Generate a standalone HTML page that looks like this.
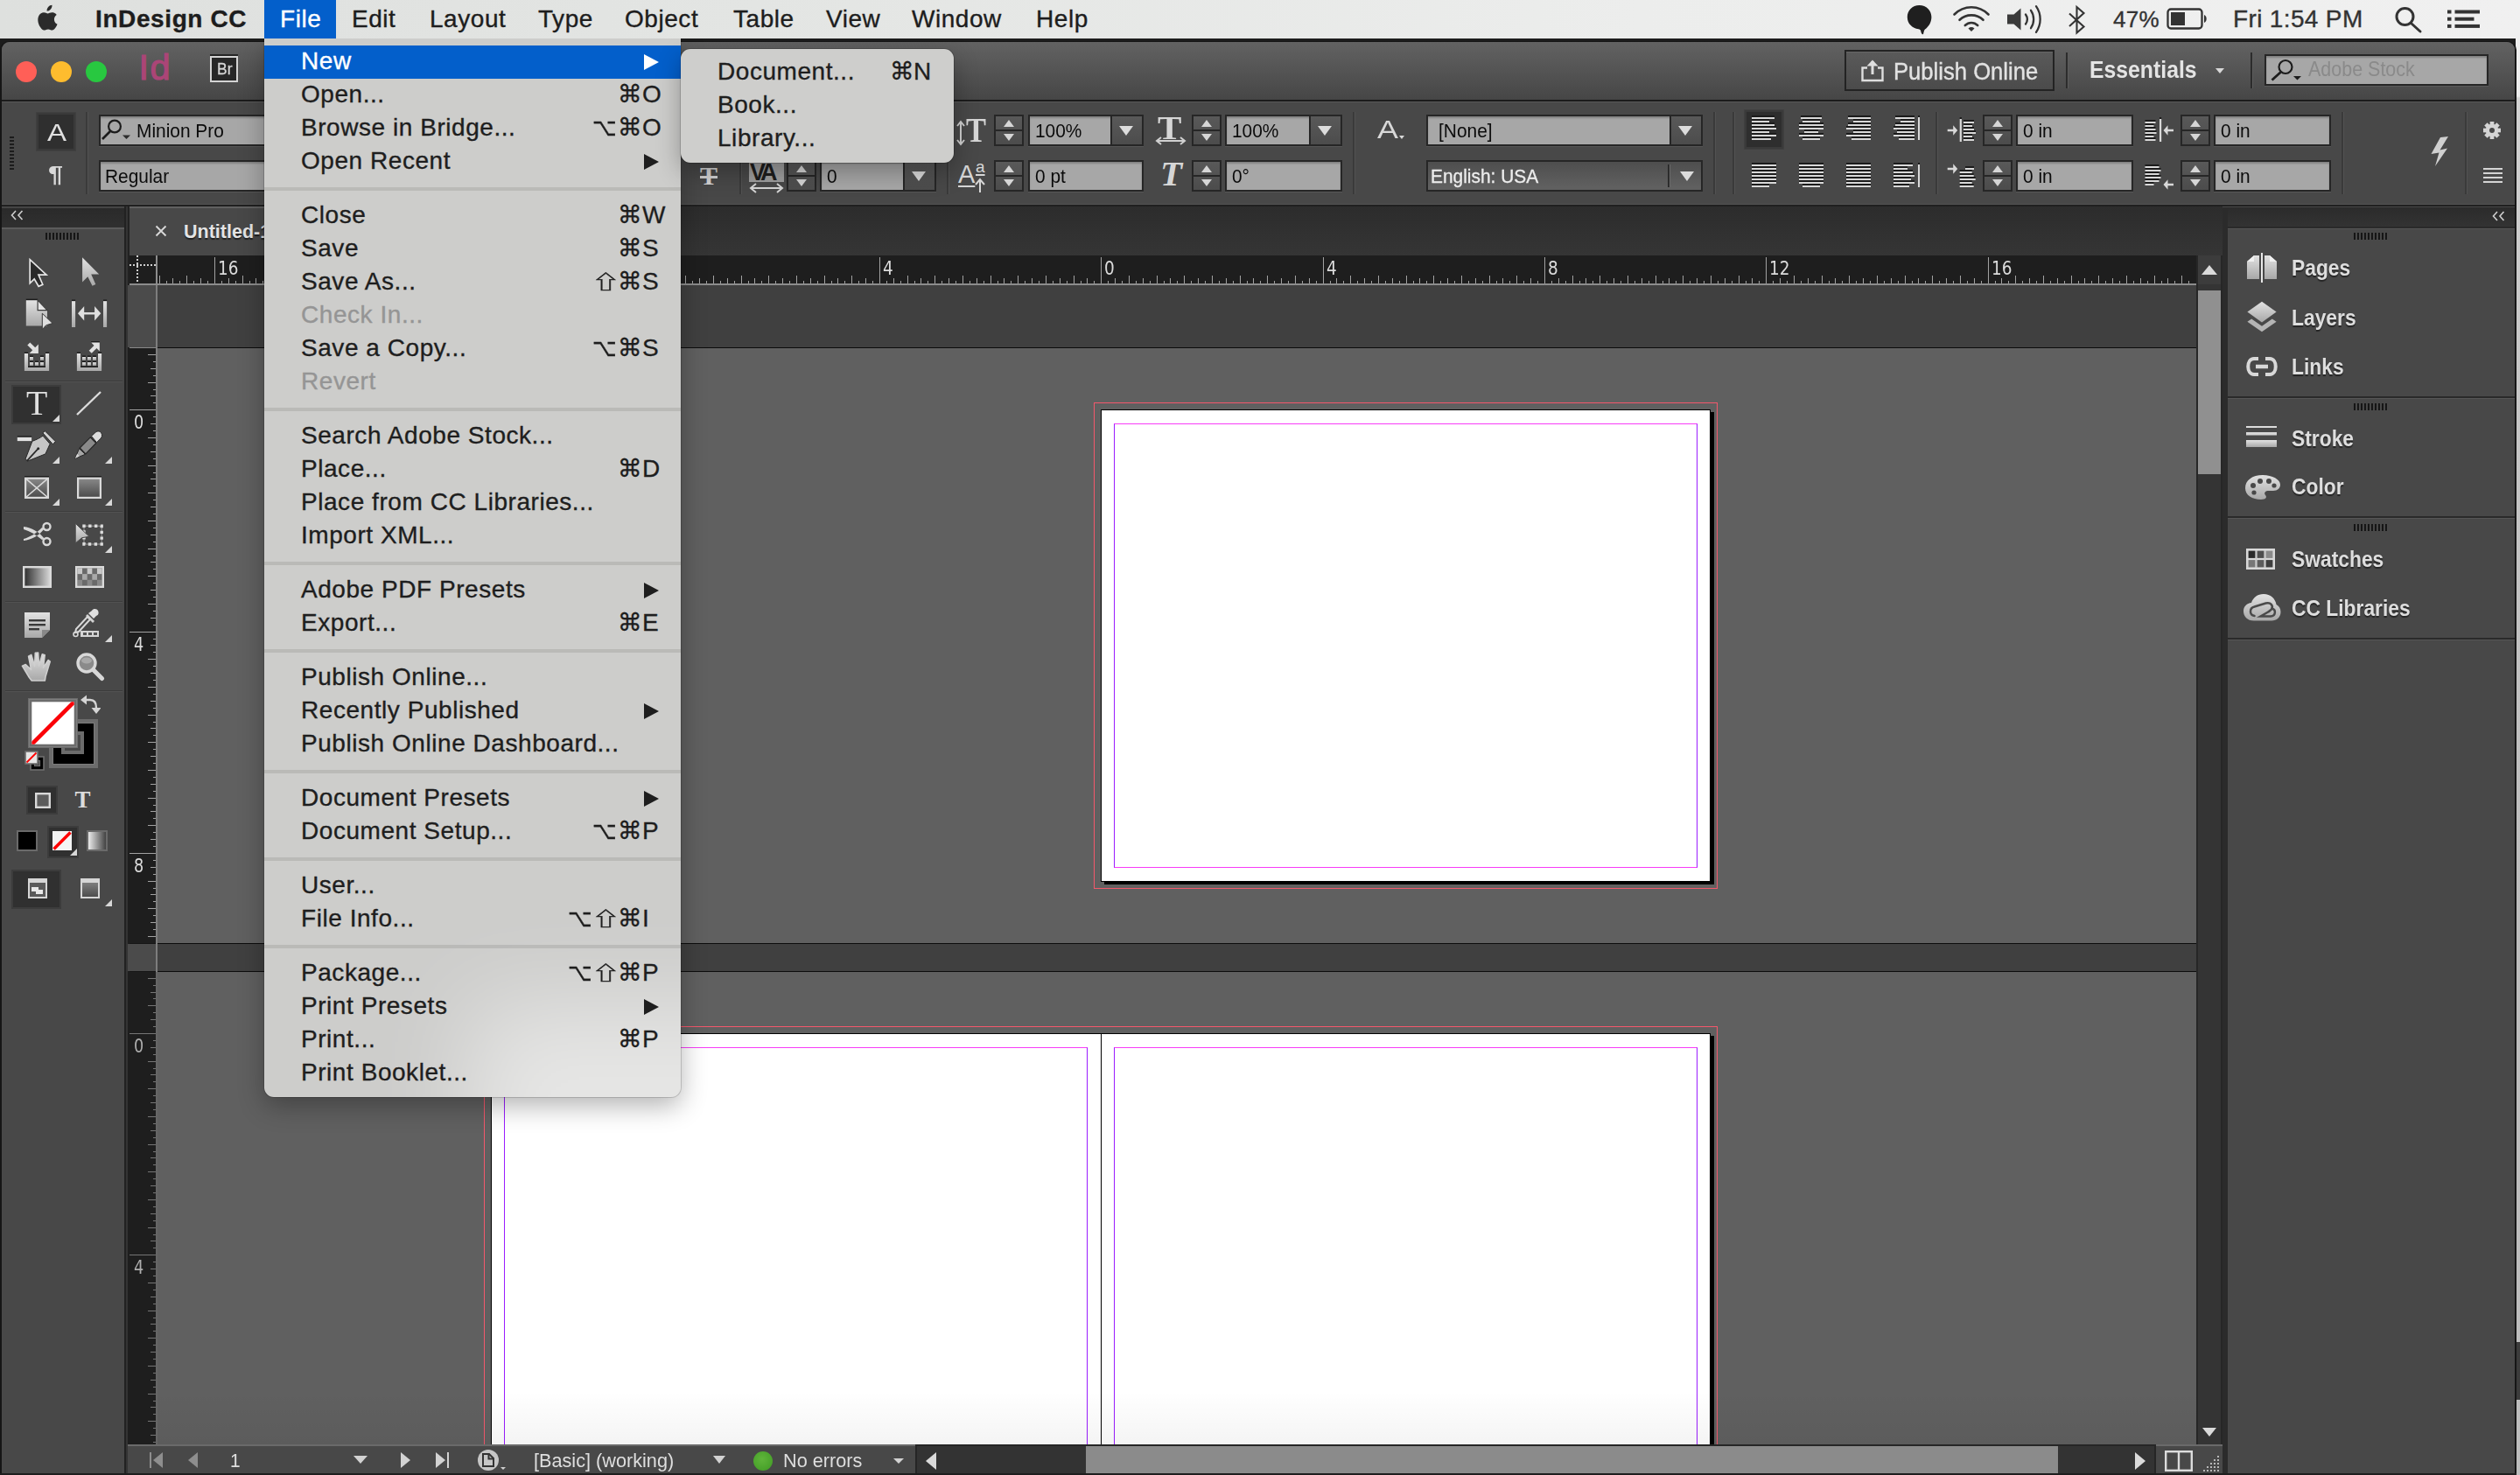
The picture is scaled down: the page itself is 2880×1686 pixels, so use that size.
<!DOCTYPE html><html><head><meta charset="utf-8"><title>InDesign CC</title><style>
*{box-sizing:border-box;margin:0;padding:0}
html,body{width:2880px;height:1686px;overflow:hidden;background:#1c1c1c}
body{position:relative;font-family:"Liberation Sans",sans-serif;}
div,svg,span.a{position:absolute}
.t{white-space:nowrap;line-height:1}
.ui{font-family:"Liberation Sans",sans-serif;transform-origin:0 50%;}
.fld{background:#a7a7a7;border:2px solid #262626;box-shadow:0 1px 0 rgba(255,255,255,.08),inset 0 2px 2px rgba(0,0,0,.22)}
.btn{background:linear-gradient(#595959,#4c4c4c);border:2px solid #262626}
.mi{left:0;width:476px;height:38px;font-size:28px;letter-spacing:.55px;color:#1e1e1e}
.mi .l{left:42px;top:3px;line-height:30px;white-space:nowrap;-webkit-text-stroke:.35px currentColor}
.mi .k{top:3px;line-height:30px;white-space:nowrap;font-family:"Liberation Sans","DejaVu Sans",sans-serif;letter-spacing:0;-webkit-text-stroke:.3px currentColor}
.mi .sh{font-family:"Noto Sans CJK JP","DejaVu Sans",sans-serif;-webkit-text-stroke:.6px currentColor;font-size:29px;transform:scale(1.13,.76);top:1px}
.dis{color:#959595}
.mi .op{transform:scaleX(.86);transform-origin:0 50%}
.sep{left:0;width:476px;height:4px;background:rgba(120,118,114,.22)}
.arr{width:0;height:0;border-left:17px solid #1e1e1e;border-top:9px solid transparent;border-bottom:9px solid transparent}
</style></head><body><div id="menubar" style="left:0;top:0;width:2880px;height:44px;z-index:50"><div style="left:0px;top:0px;width:2880px;height:44px;background:linear-gradient(90deg,#dee0de,#e3e5e3 30%,#ecedec 65%,#f0f0f0);"></div><svg style="left:41px;top:4px" width="28" height="33" viewBox="0 0 28 33"><path fill="#2b2b2b" d="M19.6 0.3c0.2 1.7-0.5 3.4-1.5 4.6-1 1.2-2.7 2.2-4.3 2-0.2-1.7 0.6-3.4 1.5-4.5C16.400 1.200 18.200 0.300 19.600 0.300zM24.9 11.3c-0.2 0.1-2.900 1.700-2.900 5.000 0 3.900 3.400 5.200 3.500 5.300 0 0.100-0.500 1.900-1.800 3.700-1.100 1.600-2.300 3.200-4.100 3.200-1.800 0-2.300-1.100-4.400-1.100-2.000 0-2.700 1.100-4.400 1.100-1.800 0.100-3.100-1.700-4.200-3.300C4.300 22.000 2.500 16.000 4.900 11.900c1.200-2.000 3.300-3.300 5.500-3.300 1.700 0 3.400 1.200 4.400 1.200 1.000 0 3.000-1.400 5.100-1.200 0.900 0 3.300 0.300 4.900 2.600z" transform="translate(-1.5,1.5) scale(1.02)"/></svg><div class="t" style="left:109px;top:6px;font-size:28px;line-height:32px;letter-spacing:0.6px;color:#1d1d1d;-webkit-text-stroke:.35px #1d1d1d;font-weight:bold;">InDesign CC</div><div style="left:302px;top:0px;width:82px;height:44px;background:#035fcb"></div><div class="t" style="left:320px;top:6px;font-size:28px;line-height:32px;letter-spacing:0.55px;color:#fff;-webkit-text-stroke:.35px #fff;">File</div><div class="t" style="left:402px;top:6px;font-size:28px;line-height:32px;letter-spacing:0.55px;color:#1d1d1d;-webkit-text-stroke:.35px #1d1d1d;">Edit</div><div class="t" style="left:491px;top:6px;font-size:28px;line-height:32px;letter-spacing:0.55px;color:#1d1d1d;-webkit-text-stroke:.35px #1d1d1d;">Layout</div><div class="t" style="left:615px;top:6px;font-size:28px;line-height:32px;letter-spacing:0.55px;color:#1d1d1d;-webkit-text-stroke:.35px #1d1d1d;">Type</div><div class="t" style="left:714px;top:6px;font-size:28px;line-height:32px;letter-spacing:0.55px;color:#1d1d1d;-webkit-text-stroke:.35px #1d1d1d;">Object</div><div class="t" style="left:838px;top:6px;font-size:28px;line-height:32px;letter-spacing:0.55px;color:#1d1d1d;-webkit-text-stroke:.35px #1d1d1d;">Table</div><div class="t" style="left:944px;top:6px;font-size:28px;line-height:32px;letter-spacing:0.55px;color:#1d1d1d;-webkit-text-stroke:.35px #1d1d1d;">View</div><div class="t" style="left:1042px;top:6px;font-size:28px;line-height:32px;letter-spacing:0.55px;color:#1d1d1d;-webkit-text-stroke:.35px #1d1d1d;">Window</div><div class="t" style="left:1184px;top:6px;font-size:28px;line-height:32px;letter-spacing:0.55px;color:#1d1d1d;-webkit-text-stroke:.35px #1d1d1d;">Help</div><svg style="left:2178px;top:5px" width="32" height="36" viewBox="0 0 32 36"><path fill="#1f1f1f" d="M15.5 1C7.500 1 1.800 7.000 1.800 14.600c0 7.400 5.600 13.000 12.800 13.600 1.500 0.100 2.300 1.000 2.600 2.200 0.300 1.300 0.700 2.700 1.500 3.600 0.500 0.500 1.300 0.300 1.500-0.400 0.300-1.500 0.600-3.800 1.800-5.000C25.800 26.000 29.400 21.000 29.400 14.600 29.400 7.000 23.600 1 15.500 1z"/></svg><svg style="left:2230px;top:5px" width="46" height="34" viewBox="0 0 46 34" fill="none" stroke="#333" stroke-width="2.600" stroke-linecap="round"><path d="M3.500 11.500C14.500 0.500 31.500 0.500 42.500 11.500"/><path d="M9.500 17.800C17.000 10.500 29.000 10.500 36.500 17.800"/><path d="M15.800 24.000C20.000 20.000 26.000 20.000 30.200 24.000"/><path d="M23 31l-3.500-3.600c2.000-1.800 5.000-1.800 7.000 0z" fill="#333" stroke="none"/></svg><svg style="left:2292px;top:4px" width="46" height="36" viewBox="0 0 46 36" fill="none" stroke="#333" stroke-width="2.300" stroke-linecap="round"><path d="M2 12.500h7.500L17.500 5.500v25.000L9.500 23.500H2z" fill="#3a3a3a" stroke="none"/><path d="M23 12.500c2.300 3.300 2.300 7.700 0 11.000"/><path d="M29.000 7.800c4.200 6.000 4.200 14.400 0 20.400"/><path d="M35.000 3.200c6.200 9.000 6.200 20.600 0 29.600"/></svg><svg style="left:2362px;top:5px" width="24" height="36" viewBox="0 0 24 36" fill="none" stroke="#333" stroke-width="2.100" stroke-linejoin="miter"><path d="M3 10.500L19.500 25.500 11.500 32.500V3.000L19.500 10.000 3 25.000"/></svg><div class="t" style="left:2415px;top:6px;font-size:26px;line-height:32px;letter-spacing:0.3px;color:#333;-webkit-text-stroke:.35px #333;">47%</div><svg style="left:2476px;top:9px" width="50" height="26" viewBox="0 0 50 26"><rect x="1.500" y="1.500" width="39" height="22" rx="3.500" fill="none" stroke="#333" stroke-width="2.300"/><rect x="5" y="5" width="16" height="15" fill="#333"/><path d="M43 8c3.600 1.000 3.600 8.000 0 9.000z" fill="#333"/></svg><div class="t" style="left:2552px;top:6px;font-size:28px;line-height:32px;letter-spacing:0.35px;color:#333;-webkit-text-stroke:.35px #333;">Fri 1:54 PM</div><svg style="left:2736px;top:7px" width="34" height="32" viewBox="0 0 34 32" fill="none" stroke="#333" stroke-width="3" stroke-linecap="round"><circle cx="12.500" cy="12" r="9.500"/><path d="M19.500 19.500L30 29"/></svg><svg style="left:2797px;top:11px" width="38" height="22" viewBox="0 0 38 22" fill="#333"><rect x="0" y="0.500" width="4.500" height="4"/><rect x="8.500" y="0.500" width="28.500" height="4"/><rect x="0" y="8.700" width="4.500" height="4"/><rect x="8.500" y="8.700" width="22" height="4"/><rect x="0" y="16.900" width="4.500" height="4"/><rect x="8.500" y="16.900" width="28.500" height="4"/></svg></div><div id="app" style="left:0;top:0;width:2880px;height:1686px"><div style="left:2875px;top:44px;width:5px;height:1642px;background:linear-gradient(#f0f0f0 0,#ececec 66px,#d2d2d2 68px,#c6c6c6 400px,#bdbdbd 1000px)"></div><div style="left:2876px;top:1534px;width:4px;height:66px;background:#3c3c3c"></div><div style="left:0px;top:47px;width:2876px;height:1639px;background:#484848;border-radius:10px 10px 0 0;border-left:2px solid #161616;border-right:2px solid #161616;border-top:1px solid #161616"></div><div style="left:2px;top:48px;width:2872px;height:66px;background:linear-gradient(#626262,#464646);border-radius:9px 9px 0 0;"></div><div style="left:2px;top:114px;width:2872px;height:2px;background:#1b1b1b"></div><div style="left:2px;top:116px;width:2872px;height:1px;background:#595959"></div><div style="left:18px;top:70px;width:24px;height:24px;background:#ff5f57;border-radius:50%"></div><div style="left:58px;top:70px;width:24px;height:24px;background:#febc2e;border-radius:50%"></div><div style="left:98px;top:70px;width:24px;height:24px;background:#28c840;border-radius:50%"></div><div class="t" style="left:158.500px;top:54px;font-size:41.500px;line-height:46px;color:#ab4577;letter-spacing:1.500px;-webkit-text-stroke:1.200px #ab4577">Id</div><div style="left:240px;top:62px;width:32px;height:2px;background:#262626"></div><div style="left:240px;top:64px;width:32px;height:30px;border:2px solid #d4d4d4;background:#272727"></div><div class="t ui" style="left:248px;top:69px;font-size:19px;line-height:20px;color:#d6d6d6;transform:scaleX(.92);-webkit-text-stroke:.3px #d6d6d6">Br</div><div style="left:2108px;top:57px;width:240px;height:47px;border:2px solid #232323;background:linear-gradient(#5a5a5a,#4b4b4b);box-shadow:inset 0 1px 0 rgba(255,255,255,.08)"></div><svg style="left:2126px;top:66px" width="28" height="28" viewBox="0 0 28 28" fill="none" stroke="#dedede" stroke-width="2.400"><path d="M8 11.500H2.500V26H25.500V11.500H20"/><path d="M14 19V4" stroke-width="3"/><path d="M7.500 9.500L14 2.500l6.500 7z" fill="#dedede" stroke="none"/></svg><div class="t ui" style="left:2164px;top:66px;font-size:28px;line-height:32px;color:#e2e2e2;-webkit-text-stroke:.4px #e2e2e2;transform:scaleX(.915)">Publish Online</div><div style="left:2361px;top:60px;width:2px;height:41px;background:#2c2c2c;box-shadow:1px 0 0 #5c5c5c"></div><div class="t ui" style="left:2388px;top:63.500px;font-size:28px;font-weight:bold;line-height:32px;color:#e4e4e4;transform:scaleX(.885)">Essentials</div><div style="left:2532px;top:78px;width:0;height:0;border-top:6px solid #d8d8d8;border-left:5px solid transparent;border-right:5px solid transparent"></div><div style="left:2572px;top:60px;width:2px;height:41px;background:#2c2c2c;box-shadow:1px 0 0 #5c5c5c"></div><div class="fld" style="left:2588px;top:62px;width:256px;height:36px;"></div><svg style="left:2594px;top:66px" width="40" height="28" viewBox="0 0 40 28" fill="none" stroke="#1c1c1c" stroke-width="2.200"><circle cx="18" cy="10.500" r="7.500"/><path d="M12.500 16.500L2.500 25.500" stroke-width="2.800"/><path d="M27 21h9l-4.500 4.500z" fill="#1c1c1c" stroke="none"/></svg><div class="t ui" style="left:2638px;top:66px;font-size:24px;line-height:26px;color:#8a8a8a;transform:scaleX(.895)">Adobe Stock</div><div style="left:2px;top:117px;width:2872px;height:117px;background:#484848"></div><div style="left:2px;top:233px;width:2872px;height:1px;background:#525252"></div><div style="left:2px;top:234px;width:2872px;height:2px;background:#202020"></div><div style="left:11px;top:156px;width:5px;height:40px;background:repeating-linear-gradient(#1c1c1c 0 2px,transparent 2px 4px)"></div><div style="left:42px;top:129px;width:44px;height:43px;background:#2f2f2f;border:2px solid #3a3a3a;box-shadow:0 0 0 1px #404040"></div><div class="t" style="left:53.500px;top:133.500px;font-size:28.500px;line-height:34px;color:#e0e0e0;transform:scaleX(1.16);transform-origin:0 0">A</div><div class="t" style="left:55px;top:183px;font-size:26px;line-height:32px;color:#d8d8d8;font-weight:bold;font-family:'Liberation Sans','DejaVu Sans',sans-serif;transform:scaleX(1.18);transform-origin:0 0">¶</div><div style="left:98px;top:128px;width:2px;height:94px;background:#3a3a3a;box-shadow:1px 0 0 #525252"></div><div class="fld" style="left:113px;top:131px;width:192px;height:36px;"></div><div class="t ui" style="left:156px;top:137px;font-size:22px;line-height:26px;color:#0b0b0b;transform:scaleX(0.95)">Minion Pro</div><svg style="left:115px;top:134px" width="40" height="30" viewBox="0 0 40 30" fill="none" stroke="#1c1c1c" stroke-width="2.200"><circle cx="16" cy="10.500" r="6.900"/><path d="M11 16L2 25" stroke-width="2.600"/><path d="M25 20.500h9l-4.500 4.500z" fill="#2c2c2c" stroke="none"/></svg><div class="fld" style="left:113px;top:183px;width:192px;height:36px;"></div><div class="t ui" style="left:120px;top:189px;font-size:22px;line-height:26px;color:#0b0b0b;transform:scaleX(0.95)">Regular</div><div class="t" style="left:800px;top:185px;font-size:30px;line-height:32px;color:#d4d4d4;font-weight:bold;font-family:'Liberation Serif',serif;text-decoration:line-through;text-decoration-thickness:2.500px">T</div><div style="left:845px;top:128px;width:2px;height:94px;background:#3a3a3a;box-shadow:1px 0 0 #525252"></div><div style="left:856px;top:186px;width:40px;height:22px;background:#9f9f9f"></div><div class="t" style="left:857px;top:182px;font-size:27px;line-height:30px;color:#1e1e1e;font-weight:bold;letter-spacing:-4px">VA</div><svg style="left:855px;top:208px" width="42" height="14" viewBox="0 0 42 14" fill="none" stroke="#d6d6d6" stroke-width="2"><path d="M3 7h36"/><path d="M9 2L3 7l6 5M33 2l6 5-6 5"/></svg><div class="btn" style="left:899px;top:183px;width:34px;height:36px;"></div><div style="left:901px;top:200px;width:30px;height:2px;background:#262626"></div><div style="left:910.0px;top:189px;width:0;height:0;border-bottom:8px solid #d6d6d6;border-left:6px solid transparent;border-right:6px solid transparent"></div><div style="left:910.0px;top:205px;width:0;height:0;border-top:8px solid #d6d6d6;border-left:6px solid transparent;border-right:6px solid transparent"></div><div class="fld" style="left:937px;top:183px;width:133px;height:36px;"></div><div class="btn" style="left:1032px;top:183px;width:38px;height:36px;"></div><div style="left:1042.0px;top:196px;width:0;height:0;border-top:11px solid #dcdcdc;border-left:8px solid transparent;border-right:8px solid transparent"></div><div class="t ui" style="left:945px;top:189px;font-size:22px;line-height:26px;color:#0b0b0b;transform:scaleX(0.95)">0</div><div style="left:1082px;top:128px;width:2px;height:94px;background:#3a3a3a;box-shadow:1px 0 0 #525252"></div><div class="t" style="left:1104px;top:128px;font-size:40px;line-height:42px;color:#d6d6d6;font-weight:bold;font-family:'Liberation Serif',serif;transform:scaleX(.86);transform-origin:0 0">T</div><svg style="left:1092px;top:137px" width="12" height="30" viewBox="0 0 12 30" fill="none" stroke="#d0d0d0" stroke-width="2"><path d="M6 3v24"/><path d="M2 7l4-5 4 5M2 23l4 5 4-5"/></svg><div class="btn" style="left:1136px;top:131px;width:34px;height:36px;"></div><div style="left:1138px;top:148px;width:30px;height:2px;background:#262626"></div><div style="left:1147.0px;top:137px;width:0;height:0;border-bottom:8px solid #d6d6d6;border-left:6px solid transparent;border-right:6px solid transparent"></div><div style="left:1147.0px;top:153px;width:0;height:0;border-top:8px solid #d6d6d6;border-left:6px solid transparent;border-right:6px solid transparent"></div><div class="fld" style="left:1175px;top:131px;width:132px;height:36px;"></div><div class="btn" style="left:1269px;top:131px;width:38px;height:36px;"></div><div style="left:1279.0px;top:144px;width:0;height:0;border-top:11px solid #dcdcdc;border-left:8px solid transparent;border-right:8px solid transparent"></div><div class="t ui" style="left:1183px;top:137px;font-size:22px;line-height:26px;color:#0b0b0b;transform:scaleX(0.95)">100%</div><div class="t" style="left:1323px;top:125px;font-size:38px;line-height:42px;color:#d6d6d6;font-weight:bold;font-family:'Liberation Serif',serif;transform:scaleX(1.08);transform-origin:0 0">T</div><svg style="left:1319px;top:155px" width="38" height="12" viewBox="0 0 38 12" fill="none" stroke="#d0d0d0" stroke-width="2"><path d="M3 6h32"/><path d="M8 2L3 6l5 4M30 2l5 4-5 4"/></svg><div class="btn" style="left:1362px;top:131px;width:34px;height:36px;"></div><div style="left:1364px;top:148px;width:30px;height:2px;background:#262626"></div><div style="left:1373.0px;top:137px;width:0;height:0;border-bottom:8px solid #d6d6d6;border-left:6px solid transparent;border-right:6px solid transparent"></div><div style="left:1373.0px;top:153px;width:0;height:0;border-top:8px solid #d6d6d6;border-left:6px solid transparent;border-right:6px solid transparent"></div><div class="fld" style="left:1400px;top:131px;width:134px;height:36px;"></div><div class="btn" style="left:1496px;top:131px;width:38px;height:36px;"></div><div style="left:1506.0px;top:144px;width:0;height:0;border-top:11px solid #dcdcdc;border-left:8px solid transparent;border-right:8px solid transparent"></div><div class="t ui" style="left:1408px;top:137px;font-size:22px;line-height:26px;color:#0b0b0b;transform:scaleX(0.95)">100%</div><div class="t" style="left:1095px;top:184px;font-size:29px;line-height:30px;color:#d6d6d6;text-decoration:underline;text-decoration-thickness:2px;text-underline-offset:3px">A</div><div class="t" style="left:1115px;top:181px;font-size:19px;line-height:20px;color:#d6d6d6;text-decoration:underline;text-decoration-thickness:2px;text-underline-offset:2px">a</div><svg style="left:1113px;top:203px" width="14" height="18" viewBox="0 0 14 18" fill="none" stroke="#d6d6d6" stroke-width="2"><path d="M7 17V3"/><path d="M2 8l5-6 5 6"/></svg><div class="btn" style="left:1136px;top:183px;width:34px;height:36px;"></div><div style="left:1138px;top:200px;width:30px;height:2px;background:#262626"></div><div style="left:1147.0px;top:189px;width:0;height:0;border-bottom:8px solid #d6d6d6;border-left:6px solid transparent;border-right:6px solid transparent"></div><div style="left:1147.0px;top:205px;width:0;height:0;border-top:8px solid #d6d6d6;border-left:6px solid transparent;border-right:6px solid transparent"></div><div class="fld" style="left:1175px;top:183px;width:132px;height:36px;"></div><div class="t ui" style="left:1183px;top:189px;font-size:22px;line-height:26px;color:#0b0b0b;transform:scaleX(0.95)">0 pt</div><div class="t" style="left:1326px;top:176px;font-size:41px;line-height:44px;color:#d6d6d6;font-weight:bold;font-family:'Liberation Serif',serif;font-style:italic">T</div><div class="btn" style="left:1362px;top:183px;width:34px;height:36px;"></div><div style="left:1364px;top:200px;width:30px;height:2px;background:#262626"></div><div style="left:1373.0px;top:189px;width:0;height:0;border-bottom:8px solid #d6d6d6;border-left:6px solid transparent;border-right:6px solid transparent"></div><div style="left:1373.0px;top:205px;width:0;height:0;border-top:8px solid #d6d6d6;border-left:6px solid transparent;border-right:6px solid transparent"></div><div class="fld" style="left:1400px;top:183px;width:134px;height:36px;"></div><div class="t ui" style="left:1408px;top:189px;font-size:22px;line-height:26px;color:#0b0b0b;transform:scaleX(0.95)">0°</div><div style="left:1546px;top:128px;width:2px;height:94px;background:#3a3a3a;box-shadow:1px 0 0 #525252"></div><div class="t" style="left:1573.500px;top:131px;font-size:30px;line-height:34px;color:#d8d8d8;transform:scaleX(1.2);transform-origin:0 0">A</div><div style="left:1599px;top:155px;width:0;height:0;border-top:4px solid #d8d8d8;border-left:3.500px solid transparent;border-right:3.500px solid transparent"></div><div class="fld" style="left:1630px;top:131px;width:316px;height:36px;"></div><div class="btn" style="left:1908px;top:131px;width:38px;height:36px;"></div><div style="left:1918.0px;top:144px;width:0;height:0;border-top:11px solid #dcdcdc;border-left:8px solid transparent;border-right:8px solid transparent"></div><div class="t ui" style="left:1644px;top:137px;font-size:22px;line-height:26px;color:#0b0b0b;transform:scaleX(0.95)">[None]</div><div style="left:1630px;top:183px;width:316px;height:36px;background:linear-gradient(#4e4e4e,#606060 90%);border:2px solid #262626"></div><div style="left:1906px;top:188px;width:2px;height:26px;background:#2c2c2c;box-shadow:1px 0 0 #6a6a6a"></div><div style="left:1920px;top:196px;width:0;height:0;border-top:11px solid #dcdcdc;border-left:8px solid transparent;border-right:8px solid transparent"></div><div class="t ui" style="-webkit-text-stroke:.3px #ececec;left:1635px;top:189px;font-size:22px;line-height:26px;color:#ececec;transform:scaleX(0.95)">English: USA</div><div style="left:1958px;top:128px;width:2px;height:94px;background:#3a3a3a;box-shadow:1px 0 0 #525252"></div><div style="left:1980px;top:128px;width:2px;height:94px;background:#3a3a3a;box-shadow:1px 0 0 #525252"></div><div style="left:1994px;top:126px;width:44px;height:44px;background:#2e2e2e;border:2px solid #3a3a3a;box-shadow:0 0 0 1px #404040"></div><svg style="left:2002px;top:132px" width="36" height="30" viewBox="0 -2 36 30"><rect x="0" y="-2" width="26" height="2" fill="#1b1b1b"/><rect x="0" y="0" width="26" height="2" fill="#d8d8d8"/><rect x="0" y="2" width="20" height="2" fill="#1b1b1b"/><rect x="0" y="4" width="20" height="2" fill="#d8d8d8"/><rect x="0" y="6" width="26" height="2" fill="#1b1b1b"/><rect x="0" y="8" width="26" height="2" fill="#d8d8d8"/><rect x="0" y="10" width="28" height="2" fill="#1b1b1b"/><rect x="0" y="12" width="28" height="2" fill="#d8d8d8"/><rect x="0" y="14" width="20" height="2" fill="#1b1b1b"/><rect x="0" y="16" width="20" height="2" fill="#d8d8d8"/><rect x="0" y="18" width="28" height="2" fill="#1b1b1b"/><rect x="0" y="20" width="28" height="2" fill="#d8d8d8"/><rect x="0" y="22" width="22" height="2" fill="#1b1b1b"/><rect x="0" y="24" width="22" height="2" fill="#d8d8d8"/></svg><svg style="left:2056px;top:132px" width="36" height="30" viewBox="0 -2 36 30"><rect x="2.0" y="-2" width="24" height="2" fill="#1b1b1b"/><rect x="2.0" y="0" width="24" height="2" fill="#d8d8d8"/><rect x="4.0" y="2" width="20" height="2" fill="#1b1b1b"/><rect x="4.0" y="4" width="20" height="2" fill="#d8d8d8"/><rect x="0.0" y="6" width="28" height="2" fill="#1b1b1b"/><rect x="0.0" y="8" width="28" height="2" fill="#d8d8d8"/><rect x="0.0" y="10" width="28" height="2" fill="#1b1b1b"/><rect x="0.0" y="12" width="28" height="2" fill="#d8d8d8"/><rect x="6.0" y="14" width="16" height="2" fill="#1b1b1b"/><rect x="6.0" y="16" width="16" height="2" fill="#d8d8d8"/><rect x="0.0" y="18" width="28" height="2" fill="#1b1b1b"/><rect x="0.0" y="20" width="28" height="2" fill="#d8d8d8"/><rect x="4.0" y="22" width="20" height="2" fill="#1b1b1b"/><rect x="4.0" y="24" width="20" height="2" fill="#d8d8d8"/></svg><svg style="left:2110px;top:132px" width="36" height="30" viewBox="0 -2 36 30"><rect x="2" y="-2" width="26" height="2" fill="#1b1b1b"/><rect x="2" y="0" width="26" height="2" fill="#d8d8d8"/><rect x="8" y="2" width="20" height="2" fill="#1b1b1b"/><rect x="8" y="4" width="20" height="2" fill="#d8d8d8"/><rect x="2" y="6" width="26" height="2" fill="#1b1b1b"/><rect x="2" y="8" width="26" height="2" fill="#d8d8d8"/><rect x="0" y="10" width="28" height="2" fill="#1b1b1b"/><rect x="0" y="12" width="28" height="2" fill="#d8d8d8"/><rect x="8" y="14" width="20" height="2" fill="#1b1b1b"/><rect x="8" y="16" width="20" height="2" fill="#d8d8d8"/><rect x="0" y="18" width="28" height="2" fill="#1b1b1b"/><rect x="0" y="20" width="28" height="2" fill="#d8d8d8"/><rect x="6" y="22" width="22" height="2" fill="#1b1b1b"/><rect x="6" y="24" width="22" height="2" fill="#d8d8d8"/></svg><svg style="left:2164px;top:132px" width="32" height="30" viewBox="0 -2 32 30"><rect x="2" y="-2" width="22" height="2" fill="#1b1b1b"/><rect x="2" y="0" width="22" height="2" fill="#d8d8d8"/><rect x="8" y="2" width="16" height="2" fill="#1b1b1b"/><rect x="8" y="4" width="16" height="2" fill="#d8d8d8"/><rect x="2" y="6" width="22" height="2" fill="#1b1b1b"/><rect x="2" y="8" width="22" height="2" fill="#d8d8d8"/><rect x="0" y="10" width="24" height="2" fill="#1b1b1b"/><rect x="0" y="12" width="24" height="2" fill="#d8d8d8"/><rect x="4" y="14" width="20" height="2" fill="#1b1b1b"/><rect x="4" y="16" width="20" height="2" fill="#d8d8d8"/><rect x="0" y="18" width="24" height="2" fill="#1b1b1b"/><rect x="0" y="20" width="24" height="2" fill="#d8d8d8"/><rect x="6" y="22" width="18" height="2" fill="#1b1b1b"/><rect x="6" y="24" width="18" height="2" fill="#d8d8d8"/><rect x="28" y="-2" width="2" height="2" fill="#1b1b1b"/><rect x="28" y="0" width="2" height="26" fill="#d8d8d8"/></svg><svg style="left:2002px;top:186px" width="36" height="30" viewBox="0 -2 36 30"><rect x="0" y="-2" width="28" height="2" fill="#1b1b1b"/><rect x="0" y="0" width="28" height="2" fill="#d8d8d8"/><rect x="0" y="2" width="28" height="2" fill="#1b1b1b"/><rect x="0" y="4" width="28" height="2" fill="#d8d8d8"/><rect x="0" y="6" width="28" height="2" fill="#1b1b1b"/><rect x="0" y="8" width="28" height="2" fill="#d8d8d8"/><rect x="0" y="10" width="28" height="2" fill="#1b1b1b"/><rect x="0" y="12" width="28" height="2" fill="#d8d8d8"/><rect x="0" y="14" width="28" height="2" fill="#1b1b1b"/><rect x="0" y="16" width="28" height="2" fill="#d8d8d8"/><rect x="0" y="18" width="28" height="2" fill="#1b1b1b"/><rect x="0" y="20" width="28" height="2" fill="#d8d8d8"/><rect x="0" y="22" width="20" height="2" fill="#1b1b1b"/><rect x="0" y="24" width="20" height="2" fill="#d8d8d8"/></svg><svg style="left:2056px;top:186px" width="36" height="30" viewBox="0 -2 36 30"><rect x="0.0" y="-2" width="28" height="2" fill="#1b1b1b"/><rect x="0.0" y="0" width="28" height="2" fill="#d8d8d8"/><rect x="0.0" y="2" width="28" height="2" fill="#1b1b1b"/><rect x="0.0" y="4" width="28" height="2" fill="#d8d8d8"/><rect x="0.0" y="6" width="28" height="2" fill="#1b1b1b"/><rect x="0.0" y="8" width="28" height="2" fill="#d8d8d8"/><rect x="0.0" y="10" width="28" height="2" fill="#1b1b1b"/><rect x="0.0" y="12" width="28" height="2" fill="#d8d8d8"/><rect x="0.0" y="14" width="28" height="2" fill="#1b1b1b"/><rect x="0.0" y="16" width="28" height="2" fill="#d8d8d8"/><rect x="0.0" y="18" width="28" height="2" fill="#1b1b1b"/><rect x="0.0" y="20" width="28" height="2" fill="#d8d8d8"/><rect x="4.0" y="22" width="20" height="2" fill="#1b1b1b"/><rect x="4.0" y="24" width="20" height="2" fill="#d8d8d8"/></svg><svg style="left:2110px;top:186px" width="36" height="30" viewBox="0 -2 36 30"><rect x="0" y="-2" width="28" height="2" fill="#1b1b1b"/><rect x="0" y="0" width="28" height="2" fill="#d8d8d8"/><rect x="0" y="2" width="28" height="2" fill="#1b1b1b"/><rect x="0" y="4" width="28" height="2" fill="#d8d8d8"/><rect x="0" y="6" width="28" height="2" fill="#1b1b1b"/><rect x="0" y="8" width="28" height="2" fill="#d8d8d8"/><rect x="0" y="10" width="28" height="2" fill="#1b1b1b"/><rect x="0" y="12" width="28" height="2" fill="#d8d8d8"/><rect x="0" y="14" width="28" height="2" fill="#1b1b1b"/><rect x="0" y="16" width="28" height="2" fill="#d8d8d8"/><rect x="0" y="18" width="28" height="2" fill="#1b1b1b"/><rect x="0" y="20" width="28" height="2" fill="#d8d8d8"/><rect x="0" y="22" width="28" height="2" fill="#1b1b1b"/><rect x="0" y="24" width="28" height="2" fill="#d8d8d8"/></svg><svg style="left:2164px;top:186px" width="32" height="30" viewBox="0 -2 32 30"><rect x="0" y="-2" width="22" height="2" fill="#1b1b1b"/><rect x="0" y="0" width="22" height="2" fill="#d8d8d8"/><rect x="0" y="2" width="16" height="2" fill="#1b1b1b"/><rect x="0" y="4" width="16" height="2" fill="#d8d8d8"/><rect x="0" y="6" width="22" height="2" fill="#1b1b1b"/><rect x="0" y="8" width="22" height="2" fill="#d8d8d8"/><rect x="0" y="10" width="24" height="2" fill="#1b1b1b"/><rect x="0" y="12" width="24" height="2" fill="#d8d8d8"/><rect x="0" y="14" width="20" height="2" fill="#1b1b1b"/><rect x="0" y="16" width="20" height="2" fill="#d8d8d8"/><rect x="0" y="18" width="24" height="2" fill="#1b1b1b"/><rect x="0" y="20" width="24" height="2" fill="#d8d8d8"/><rect x="0" y="22" width="18" height="2" fill="#1b1b1b"/><rect x="0" y="24" width="18" height="2" fill="#d8d8d8"/><rect x="28" y="-2" width="2" height="2" fill="#1b1b1b"/><rect x="28" y="0" width="2" height="26" fill="#d8d8d8"/></svg><div style="left:2212px;top:128px;width:2px;height:94px;background:#3a3a3a;box-shadow:1px 0 0 #525252"></div><svg style="left:2220px;top:126px" width="270" height="96" viewBox="2220 126 270 96"><path d="M2225.7 147.8h6.500v-4.500l5 5.700-5 5.700v-4.500h-6.500z" fill="#d8d8d8"/><rect x="2239.700" y="134" width="2.200" height="2" fill="#1b1b1b"/><rect x="2239.700" y="136" width="2.200" height="26" fill="#d8d8d8"/><rect x="2244" y="137" width="12" height="2" fill="#1b1b1b"/><rect x="2244" y="139" width="12" height="2" fill="#d8d8d8"/><rect x="2244" y="141" width="10" height="2" fill="#1b1b1b"/><rect x="2244" y="143" width="10" height="2" fill="#d8d8d8"/><rect x="2244" y="145" width="12" height="2" fill="#1b1b1b"/><rect x="2244" y="147" width="12" height="2" fill="#d8d8d8"/><rect x="2244" y="149" width="14" height="2" fill="#1b1b1b"/><rect x="2244" y="151" width="14" height="2" fill="#d8d8d8"/><rect x="2244" y="153" width="10" height="2" fill="#1b1b1b"/><rect x="2244" y="155" width="10" height="2" fill="#d8d8d8"/><rect x="2244" y="157" width="12" height="2" fill="#1b1b1b"/><rect x="2244" y="159" width="12" height="2" fill="#d8d8d8"/><path d="M2225.7 191.8h6.500v-4.500l5 5.700-5 5.700v-4.500h-6.500z" fill="#d8d8d8"/><rect x="2246" y="190" width="10" height="2" fill="#1b1b1b"/><rect x="2246" y="192" width="10" height="2" fill="#d8d8d8"/><rect x="2239.7" y="194" width="14" height="2" fill="#1b1b1b"/><rect x="2239.7" y="196" width="14" height="2" fill="#d8d8d8"/><rect x="2239.7" y="198" width="16" height="2" fill="#1b1b1b"/><rect x="2239.7" y="200" width="16" height="2" fill="#d8d8d8"/><rect x="2239.7" y="202" width="18" height="2" fill="#1b1b1b"/><rect x="2239.7" y="204" width="18" height="2" fill="#d8d8d8"/><rect x="2239.7" y="206" width="14" height="2" fill="#1b1b1b"/><rect x="2239.7" y="208" width="14" height="2" fill="#d8d8d8"/><rect x="2239.7" y="210" width="16" height="2" fill="#1b1b1b"/><rect x="2239.7" y="212" width="16" height="2" fill="#d8d8d8"/><rect x="2451.5" y="137" width="12" height="2" fill="#1b1b1b"/><rect x="2451.5" y="139" width="12" height="2" fill="#d8d8d8"/><rect x="2451.5" y="141" width="10" height="2" fill="#1b1b1b"/><rect x="2451.5" y="143" width="10" height="2" fill="#d8d8d8"/><rect x="2451.5" y="145" width="12" height="2" fill="#1b1b1b"/><rect x="2451.5" y="147" width="12" height="2" fill="#d8d8d8"/><rect x="2451.5" y="149" width="13" height="2" fill="#1b1b1b"/><rect x="2451.5" y="151" width="13" height="2" fill="#d8d8d8"/><rect x="2451.5" y="153" width="10" height="2" fill="#1b1b1b"/><rect x="2451.5" y="155" width="10" height="2" fill="#d8d8d8"/><rect x="2451.5" y="157" width="12" height="2" fill="#1b1b1b"/><rect x="2451.5" y="159" width="12" height="2" fill="#d8d8d8"/><rect x="2468" y="134" width="2.200" height="2" fill="#1b1b1b"/><rect x="2468" y="136" width="2.200" height="26" fill="#d8d8d8"/><path d="M2484.0 147.8h-6.500v-4.500l-5 5.700 5 5.700v-4.500h6.500z" fill="#d8d8d8"/><rect x="2451.5" y="188" width="16" height="2" fill="#1b1b1b"/><rect x="2451.5" y="190" width="16" height="2" fill="#d8d8d8"/><rect x="2451.5" y="192" width="18" height="2" fill="#1b1b1b"/><rect x="2451.5" y="194" width="18" height="2" fill="#d8d8d8"/><rect x="2451.5" y="196" width="16" height="2" fill="#1b1b1b"/><rect x="2451.5" y="198" width="16" height="2" fill="#d8d8d8"/><rect x="2451.5" y="200" width="18" height="2" fill="#1b1b1b"/><rect x="2451.5" y="202" width="18" height="2" fill="#d8d8d8"/><rect x="2451.5" y="204" width="16" height="2" fill="#1b1b1b"/><rect x="2451.5" y="206" width="16" height="2" fill="#d8d8d8"/><rect x="2451.5" y="208" width="10" height="2" fill="#1b1b1b"/><rect x="2451.5" y="210" width="10" height="2" fill="#d8d8d8"/><path d="M2484.0 209.8h-6.500v-4.500l-5 5.700 5 5.700v-4.500h6.500z" fill="#d8d8d8"/></svg><div class="btn" style="left:2266px;top:131px;width:34px;height:36px;"></div><div style="left:2268px;top:148px;width:30px;height:2px;background:#262626"></div><div style="left:2277.0px;top:137px;width:0;height:0;border-bottom:8px solid #d6d6d6;border-left:6px solid transparent;border-right:6px solid transparent"></div><div style="left:2277.0px;top:153px;width:0;height:0;border-top:8px solid #d6d6d6;border-left:6px solid transparent;border-right:6px solid transparent"></div><div class="fld" style="left:2304px;top:131px;width:134px;height:36px;"></div><div class="t ui" style="left:2312px;top:137px;font-size:22px;line-height:26px;color:#0b0b0b;transform:scaleX(0.95)">0 in</div><div class="btn" style="left:2492px;top:131px;width:34px;height:36px;"></div><div style="left:2494px;top:148px;width:30px;height:2px;background:#262626"></div><div style="left:2503.0px;top:137px;width:0;height:0;border-bottom:8px solid #d6d6d6;border-left:6px solid transparent;border-right:6px solid transparent"></div><div style="left:2503.0px;top:153px;width:0;height:0;border-top:8px solid #d6d6d6;border-left:6px solid transparent;border-right:6px solid transparent"></div><div class="fld" style="left:2530px;top:131px;width:134px;height:36px;"></div><div class="t ui" style="left:2538px;top:137px;font-size:22px;line-height:26px;color:#0b0b0b;transform:scaleX(0.95)">0 in</div><div class="btn" style="left:2266px;top:183px;width:34px;height:36px;"></div><div style="left:2268px;top:200px;width:30px;height:2px;background:#262626"></div><div style="left:2277.0px;top:189px;width:0;height:0;border-bottom:8px solid #d6d6d6;border-left:6px solid transparent;border-right:6px solid transparent"></div><div style="left:2277.0px;top:205px;width:0;height:0;border-top:8px solid #d6d6d6;border-left:6px solid transparent;border-right:6px solid transparent"></div><div class="fld" style="left:2304px;top:183px;width:134px;height:36px;"></div><div class="t ui" style="left:2312px;top:189px;font-size:22px;line-height:26px;color:#0b0b0b;transform:scaleX(0.95)">0 in</div><div class="btn" style="left:2492px;top:183px;width:34px;height:36px;"></div><div style="left:2494px;top:200px;width:30px;height:2px;background:#262626"></div><div style="left:2503.0px;top:189px;width:0;height:0;border-bottom:8px solid #d6d6d6;border-left:6px solid transparent;border-right:6px solid transparent"></div><div style="left:2503.0px;top:205px;width:0;height:0;border-top:8px solid #d6d6d6;border-left:6px solid transparent;border-right:6px solid transparent"></div><div class="fld" style="left:2530px;top:183px;width:134px;height:36px;"></div><div class="t ui" style="left:2538px;top:189px;font-size:22px;line-height:26px;color:#0b0b0b;transform:scaleX(0.95)">0 in</div><div style="left:2676px;top:128px;width:2px;height:94px;background:#3a3a3a;box-shadow:1px 0 0 #525252"></div><div style="left:2817px;top:128px;width:2px;height:94px;background:#3a3a3a;box-shadow:1px 0 0 #525252"></div><svg style="left:2776px;top:156px" width="24" height="36" viewBox="0 0 24 36"><path fill="#d0d0d0" d="M13 1L22 0 12.500 15.500 21 13.500 7 34l4.500-15.500L2.500 20z"/></svg><svg style="left:2837.500px;top:138.500px" width="20" height="20" viewBox="-11 -11 22 22"><g fill="#d4d4d4"><rect x="-2.600" y="-11" width="5.200" height="6" transform="rotate(0)"/><rect x="-2.600" y="-11" width="5.200" height="6" transform="rotate(45)"/><rect x="-2.600" y="-11" width="5.200" height="6" transform="rotate(90)"/><rect x="-2.600" y="-11" width="5.200" height="6" transform="rotate(135)"/><rect x="-2.600" y="-11" width="5.200" height="6" transform="rotate(180)"/><rect x="-2.600" y="-11" width="5.200" height="6" transform="rotate(225)"/><rect x="-2.600" y="-11" width="5.200" height="6" transform="rotate(270)"/><rect x="-2.600" y="-11" width="5.200" height="6" transform="rotate(315)"/><circle r="8"/></g><circle r="3.300" fill="#484848"/></svg><svg style="left:2838px;top:192px" width="22" height="18" viewBox="0 0 22 18" fill="#d4d4d4"><rect y="0" width="22" height="2"/><rect y="5" width="22" height="2"/><rect y="10" width="22" height="2"/><rect y="15" width="22" height="2"/></svg><div style="left:2px;top:236px;width:140px;height:1450px;background:#484848"></div><div style="left:142px;top:236px;width:6px;height:1450px;background:linear-gradient(90deg,#222 0 2px,#343434 2px 4px,#222 4px 6px)"></div><div style="left:2px;top:236px;width:140px;height:24px;background:linear-gradient(#454545 0 2px,#2a2a2a 2px,#303030)"></div><div style="left:2px;top:260px;width:140px;height:2px;background:#5c5c5c"></div><svg style="left:12px;top:240px" width="16" height="12" viewBox="0 0 16 12" fill="none" stroke="#cfcfcf" stroke-width="1.600"><path d="M6 1L1.500 6 6 11M13.500 1L9 6l4.500 5"/></svg><div style="left:52px;top:266px;width:38px;height:8px;background:repeating-linear-gradient(90deg,#161616 0 2px,transparent 2px 4px)"></div><div style="left:6px;top:435px;width:134px;height:1px;background:#3c3c3c;box-shadow:0 1px 0 #525252"></div><div style="left:6px;top:584px;width:134px;height:1px;background:#3c3c3c;box-shadow:0 1px 0 #525252"></div><div style="left:6px;top:687px;width:134px;height:1px;background:#3c3c3c;box-shadow:0 1px 0 #525252"></div><div style="left:6px;top:789px;width:134px;height:1px;background:#3c3c3c;box-shadow:0 1px 0 #525252"></div><div style="left:13px;top:440px;width:57px;height:45px;background:#303030;border:2px solid #3c3c3c"></div><svg width="0" height="0" style="left:0;top:0"><defs><linearGradient id="gv" x1="0" y1="0" x2="0" y2="1"><stop offset="0" stop-color="#e2e2e2"/><stop offset="1" stop-color="#a8a8a8"/></linearGradient><linearGradient id="gh" x1="0" y1="0" x2="1" y2="0"><stop offset="0" stop-color="#2c2c2c"/><stop offset="1" stop-color="#dadada"/></linearGradient><linearGradient id="gh2" x1="0" y1="0" x2="1" y2="0"><stop offset="0" stop-color="#f4f4f4"/><stop offset="1" stop-color="#3a3a3a"/></linearGradient><linearGradient id="gd" x1="0" y1="0" x2="0" y2="1"><stop offset="0" stop-color="#8a8a8a"/><stop offset="1" stop-color="#4a4a4a"/></linearGradient></defs></svg><svg style="left:0;top:280px" width="148" height="160" viewBox="0 280 148 160"><path d="M34.200 296.700V323.800L39.200 318.900 44.100 327.300 48.800 325.200 44 314.100H53Z" fill="#2a2a2a" stroke="#e6e6e6" stroke-width="1.700" stroke-linejoin="miter"/><path d="M94.100 294.300V322.600L100.300 316.200 105.500 326.800 109.300 325 104.200 313.600 113.200 313.400Z" fill="url(#gv)"/><path d="M29.800 341.600h13.300v1.600H29.800z" fill="#1c1c1c"/><path d="M29.800 343.200H43.100L54 354.600V372.600H29.800Z" fill="url(#gv)"/><path d="M43.100 343.200V354.600H54Z" fill="#e4e4e4" stroke="#3a3a3a" stroke-width="1.200"/><path d="M48.300 358.200V376.700L52.600 371.800 60.100 369.500Z" fill="#dedede" stroke="#3a3a3a" stroke-width="1" stroke-linejoin="round"/><path d="M82 342.600h4.100v1.600H82zM118 342.600h4.100v1.600H118z" fill="#1c1c1c"/><rect x="82" y="344.200" width="4.100" height="29.800" fill="url(#gv)"/><rect x="118" y="344.200" width="4.100" height="29.800" fill="url(#gv)"/><path d="M89 358.200L96.200 350V356.900H108.100V350L115.300 358.200 108.100 366.400V359.500H96.200V366.400Z" fill="#dedede"/><path d="M27.9 402.500h4.100v1.600h-4.100zM52.0 402.500h4.100v1.600h-4.100zM32.0 418.400h20v1.600h-20z" fill="#1c1c1c"/><path d="M27.9 404.100h4.100v15.900h20v-15.900h4.100v19.900H27.9z" fill="url(#gv)"/><rect x="34" y="406.4" width="3.9" height="1.600" fill="#1c1c1c"/><rect x="34" y="408" width="3.9" height="3.8" fill="url(#gv)"/><rect x="46" y="406.4" width="3.9" height="1.600" fill="#1c1c1c"/><rect x="46" y="408" width="3.9" height="3.8" fill="url(#gv)"/><rect x="34" y="412.5" width="3.9" height="1.600" fill="#1c1c1c"/><rect x="34" y="414.1" width="3.9" height="3.8" fill="url(#gv)"/><rect x="40" y="412.5" width="3.9" height="1.600" fill="#1c1c1c"/><rect x="40" y="414.1" width="3.9" height="3.8" fill="url(#gv)"/><rect x="46" y="412.5" width="3.9" height="1.600" fill="#1c1c1c"/><rect x="46" y="414.1" width="3.9" height="3.8" fill="url(#gv)"/><path d="M32.800 392.900L40 400.100" stroke="#e2e2e2" stroke-width="4.200"/><path d="M43.900 393.500V404.100H33.500Z" fill="#dedede"/><path d="M87.9 402.500h4.100v1.600h-4.100zM112.0 402.500h4.100v1.600h-4.100zM92.0 418.400h20v1.600h-20z" fill="#1c1c1c"/><path d="M87.9 404.100h4.100v15.900h20v-15.900h4.100v19.900H87.9z" fill="url(#gv)"/><rect x="94" y="406.4" width="3.9" height="1.600" fill="#1c1c1c"/><rect x="94" y="408" width="3.9" height="3.8" fill="url(#gv)"/><rect x="100" y="406.4" width="3.9" height="1.600" fill="#1c1c1c"/><rect x="100" y="408" width="3.9" height="3.8" fill="url(#gv)"/><rect x="106" y="406.4" width="3.9" height="1.600" fill="#1c1c1c"/><rect x="106" y="408" width="3.9" height="3.8" fill="url(#gv)"/><rect x="94" y="412.5" width="3.9" height="1.600" fill="#1c1c1c"/><rect x="94" y="414.1" width="3.9" height="3.8" fill="url(#gv)"/><rect x="100" y="412.5" width="3.9" height="1.600" fill="#1c1c1c"/><rect x="100" y="414.1" width="3.9" height="3.8" fill="url(#gv)"/><rect x="106" y="412.5" width="3.9" height="1.600" fill="#1c1c1c"/><rect x="106" y="414.1" width="3.9" height="3.8" fill="url(#gv)"/><path d="M104.200 390h9.600v1.600h-9.600z" fill="#1c1c1c"/><path d="M103.200 402.300L109.500 396" stroke="#e2e2e2" stroke-width="4.200"/><path d="M104.200 391.600H113.800V401.500Z" fill="#e2e2e2"/></svg><div class="t" style="left:29.500px;top:439px;font-size:39px;line-height:44px;color:#e0e0e0;font-family:'Liberation Serif',serif;transform:scaleX(1.02);transform-origin:0 0">T</div><div style="left:60px;top:474px;width:0;height:0;border-bottom:8px solid #d8d8d8;border-left:8px solid transparent"></div><svg style="left:86px;top:446px" width="32" height="30" viewBox="0 0 32 30"><path d="M2 28L29 2" stroke="#dcdcdc" stroke-width="2.400"/></svg><svg style="left:10px;top:486px" width="120" height="50" viewBox="10 486 120 50"><rect x="19.800" y="498.300" width="16.300" height="1.600" fill="#1c1c1c"/><rect x="19.800" y="499.800" width="16.300" height="4.300" fill="#e2e2e2"/><path d="M36.900 504.300C41.500 502.600 45.500 500.800 49 498.100L57.100 507.400 51.900 518.900 31.700 527 29 524.800Z" fill="#c6c6c6" stroke="#262626" stroke-width="1" stroke-linejoin="round"/><path d="M31.200 526.300L43.800 512.700" stroke="#2a2a2a" stroke-width="1.700" stroke-linecap="round"/><circle cx="43.700" cy="512.800" r="1.500" fill="#2a2a2a"/><path d="M48.800 494.800L51.400 492.700 63.300 504.600 60.500 507.900Z" fill="#d2d2d2" stroke="#262626" stroke-width="1" stroke-linejoin="round"/><path d="M103.300 499.800L109.800 506.500 97.900 518.900 91.200 512Z" fill="#8a8a8a" stroke="#262626" stroke-width="1.200" stroke-linejoin="round"/><path d="M104.500 498.600L109 494.300C111.500 492 114.500 492.800 115.800 495 117 497 116.800 499.500 115 501.300L110.500 505.700Z" fill="#dcdcdc" stroke="#262626" stroke-width="1" stroke-linejoin="round"/><path d="M90.500 512.700L97.400 519.300 85.700 524.100Z" fill="#a6a6a6" stroke="#262626" stroke-width="1" stroke-linejoin="round"/><path d="M88.200 518.800L90.800 521.600 85.900 523.900Z" fill="#d8d8d8"/></svg><div style="left:60px;top:522px;width:0;height:0;border-bottom:8px solid #d8d8d8;border-left:8px solid transparent"></div><div style="left:120px;top:522px;width:0;height:0;border-bottom:8px solid #d8d8d8;border-left:8px solid transparent"></div><svg style="left:28px;top:544px" width="28" height="26" viewBox="0 0 28 26"><rect x="0" y="0" width="28" height="1.600" fill="#1c1c1c"/><rect x="1.100" y="2.700" width="25.800" height="22.200" fill="url(#gd)" stroke="#dadada" stroke-width="2.200"/><path d="M1 2.600l26 22.400M27 2.600L1 25" stroke="#dadada" stroke-width="1.600"/></svg><div style="left:60px;top:570px;width:0;height:0;border-bottom:8px solid #d8d8d8;border-left:8px solid transparent"></div><svg style="left:88px;top:544px" width="28" height="26" viewBox="0 0 28 26"><rect x="0" y="0" width="28" height="1.600" fill="#1c1c1c"/><rect x="1.100" y="2.700" width="25.800" height="22.200" fill="url(#gd)" stroke="#dadada" stroke-width="2.200"/></svg><div style="left:120px;top:570px;width:0;height:0;border-bottom:8px solid #d8d8d8;border-left:8px solid transparent"></div><svg style="left:26px;top:596px" width="34" height="30" viewBox="0 0 34 30"><g fill="none" stroke="#d8d8d8" stroke-width="2.400"><circle cx="27.500" cy="6" r="4"/><circle cx="27.500" cy="23" r="4"/></g><path d="M1 6c9 1 18 6 24 14l-3 1C15 15 8 11 1 9zM1 22c9-1 18-6 24-14l-3-1C15 14 8 18 1 20z" fill="#d8d8d8"/></svg><svg style="left:85px;top:597px" width="36" height="30" viewBox="0 0 36 30"><rect x="11" y="4.200" width="20.200" height="20.800" fill="none" stroke="#9a9a9a" stroke-width="1"/><rect x="11" y="4.200" width="20.200" height="20.800" fill="none" stroke="#dcdcdc" stroke-width="3.400" stroke-dasharray="3.400 3.433" stroke-dashoffset="1.700"/><path d="M1.200 1.300V23.900L8.700 17.700 16.900 16.300Z" fill="url(#gv)" stroke="#484848" stroke-width="1"/></svg><div style="left:120px;top:624px;width:0;height:0;border-bottom:8px solid #d8d8d8;border-left:8px solid transparent"></div><svg style="left:26px;top:647px" width="33" height="25" viewBox="0 0 33 25"><rect x="1.200" y="1.200" width="30.600" height="22.600" fill="url(#gh)" stroke="#dadada" stroke-width="2.400"/></svg><svg style="left:86px;top:647px" width="33" height="25" viewBox="0 0 33 25"><rect x="1.200" y="1.200" width="30.600" height="22.600" fill="#6a6a6a" stroke="#dadada" stroke-width="2.400"/><rect x="2.4" y="2.4" width="5.640" height="6.700" fill="#c8c8c8" opacity="1.0"/><rect x="13.68" y="2.4" width="5.640" height="6.700" fill="#c8c8c8" opacity="1.0"/><rect x="24.959999999999997" y="2.4" width="5.640" height="6.700" fill="#c8c8c8" opacity="1.0"/><rect x="8.04" y="9.1" width="5.640" height="6.700" fill="#c8c8c8" opacity="0.6699999999999999"/><rect x="19.319999999999997" y="9.1" width="5.640" height="6.700" fill="#c8c8c8" opacity="0.6699999999999999"/><rect x="2.4" y="15.8" width="5.640" height="6.700" fill="#c8c8c8" opacity="0.33999999999999997"/><rect x="13.68" y="15.8" width="5.640" height="6.700" fill="#c8c8c8" opacity="0.33999999999999997"/><rect x="24.959999999999997" y="15.8" width="5.640" height="6.700" fill="#c8c8c8" opacity="0.33999999999999997"/></svg><svg style="left:28px;top:700px" width="30" height="30" viewBox="0 0 30 30"><path d="M0 0h29v20l-9 9H0z" fill="url(#gv)"/><path d="M29 20h-9v9z" fill="#888"/><g fill="#3a3a3a"><rect x="5" y="8" width="19" height="2.400"/><rect x="5" y="13" width="19" height="2.400"/><rect x="5" y="18" width="12" height="2.400"/></g></svg><svg style="left:83px;top:695px" width="32" height="36" viewBox="0 0 32 36"><path d="M22 3c2-3 6-2 7 0s1 5-2 6l-3 3-6-6z" fill="#e0e0e0"/><path d="M17 7l8 8-2 2-8-8z" fill="#d0d0d0"/><path d="M17 10L4 24l-1 4 4-1 13-14z" fill="none" stroke="#d8d8d8" stroke-width="2"/><circle cx="3.500" cy="30" r="2.500" fill="none" stroke="#d8d8d8" stroke-width="1.600"/><rect x="9" y="26" width="21" height="7" fill="#d6d6d6"/><g fill="#555"><rect x="12" y="28" width="4" height="3"/><rect x="18" y="28" width="4" height="3"/><rect x="24" y="28" width="4" height="3"/></g></svg><div style="left:120px;top:726px;width:0;height:0;border-bottom:8px solid #d8d8d8;border-left:8px solid transparent"></div><svg style="left:24px;top:744px" width="36" height="36" viewBox="0 0 36 36"><path d="M1.500 17.300L5.300 15.500 11.600 21.500 8.600 6.300 11.800 4.400 15.600 17.500 16.300 2.300 19.600 2.100 20.600 17 24.300 3.700 27.200 4.800 25.400 19.300 31.200 10.500 33.200 12.200 28 29.600 27.300 34H12.200L9.500 30.500Z" fill="url(#gv)" stroke="#cfcfcf" stroke-width="1.600" stroke-linejoin="round"/></svg><svg style="left:86px;top:745px" width="34" height="34" viewBox="0 0 34 34"><circle cx="13" cy="13" r="10" fill="#8a8a8a" stroke="#d8d8d8" stroke-width="3.400"/><ellipse cx="13" cy="10" rx="6" ry="3.500" fill="#a8a8a8"/><path d="M20.500 20.500l10 10" stroke="#d8d8d8" stroke-width="5" stroke-linecap="round"/></svg><div style="left:56px;top:822px;width:56px;height:56px;background:#000;border:4px solid #6c6c6c;box-shadow:inset 0 0 0 1px #7c7c7c"></div><div style="left:70px;top:836px;width:26px;height:26px;background:#484848;border:4px solid #6c6c6c"></div><svg style="left:31.5px;top:797.5px" width="57" height="57" viewBox="0 0 57 57"><rect x="0" y="0" width="57" height="57" fill="#6c6c6c"/><rect x="1.500" y="1.500" width="54" height="54" fill="none" stroke="#7e7e7e" stroke-width="1"/><rect x="4.300" y="4.300" width="48.400" height="48.400" fill="#fff"/><clipPath id="cpf"><rect x="4.300" y="4.300" width="48.400" height="48.400"/></clipPath><path d="M4.300 52.700L52.700 4.300" stroke="#fb0007" stroke-width="4.600" clip-path="url(#cpf)"/></svg><svg style="left:91px;top:793px" width="24" height="24" viewBox="0 0 24 24"><g fill="none" stroke="#d4d4d4" stroke-width="2.400"><path d="M4 7h8c5 0 7 3 7 9v2"/></g><path d="M8 1.500v11L1 7zM13.500 16h11L19 23z" fill="#d4d4d4"/></svg><svg style="left:28px;top:858px" width="24" height="24" viewBox="0 0 24 24"><rect x="7" y="7" width="15" height="15" fill="#000" stroke="#6e6e6e" stroke-width="1.600"/><rect x="11.500" y="11.500" width="6" height="6" fill="#484848" stroke="#6e6e6e" stroke-width="1.200"/><rect x="1" y="1" width="14" height="14" fill="#e6e6e6" stroke="#6e6e6e" stroke-width="1.600"/><path d="M2.500 13.500l11-11" stroke="#f00" stroke-width="1.800"/></svg><div style="left:30px;top:898px;width:36px;height:33px;background:#303030;border:2px solid #3c3c3c"></div><svg style="left:40px;top:906px" width="18" height="18" viewBox="0 0 18 18"><rect x="1.200" y="1.200" width="15.600" height="15.600" fill="#5c5c5c" stroke="#d8d8d8" stroke-width="2.400"/></svg><div class="t" style="left:85.500px;top:899px;font-size:27px;line-height:30px;font-weight:bold;color:#dcdcdc;font-family:'Liberation Serif',serif">T</div><div style="left:19px;top:949px;width:24px;height:24px;background:#000;border:2px solid #6a6a6a"></div><div style="left:54px;top:944px;width:36px;height:37px;background:#303030;border:2px solid #3c3c3c"></div><svg style="left:60px;top:950px" width="22" height="22" viewBox="0 0 22 22"><rect x="0" y="0" width="22" height="22" fill="#f4f4f4"/><path d="M1.500 20.500l19-19" stroke="#f00" stroke-width="3.600"/></svg><div style="left:80px;top:970px;width:0;height:0;border-bottom:8px solid #d8d8d8;border-left:8px solid transparent"></div><svg style="left:99px;top:949px" width="24" height="24" viewBox="0 0 24 24"><rect x="1" y="1" width="22" height="22" fill="url(#gh2)" stroke="#6a6a6a" stroke-width="2"/></svg><div style="left:13px;top:994px;width:57px;height:45px;background:#303030;border:2px solid #3c3c3c"></div><svg style="left:32px;top:1004px" width="22" height="23" viewBox="0 0 22 23"><rect x="1" y="1" width="20" height="21" fill="#5a5a5a" stroke="#d6d6d6" stroke-width="2"/><rect x="1" y="1" width="20" height="4" fill="#d6d6d6"/><path d="M4 10h8v3h5v5h-8v-3H4z" fill="#e8e8e8"/></svg><svg style="left:92px;top:1004px" width="22" height="23" viewBox="0 0 22 23"><rect x="1" y="1" width="20" height="21" fill="url(#gd)" stroke="#d6d6d6" stroke-width="2"/><rect x="1" y="1" width="20" height="4" fill="#d6d6d6"/></svg><div style="left:120px;top:1028px;width:0;height:0;border-bottom:8px solid #d8d8d8;border-left:8px solid transparent"></div><div style="left:148px;top:236px;width:2392px;height:56px;background:linear-gradient(#2c2c2c,#353535)"></div><div style="left:148px;top:236px;width:330px;height:56px;background:#484848;border-top:2px solid #606060;border-right:2px solid #262626"></div><svg style="left:177px;top:257px" width="14" height="14" viewBox="0 0 14 14"><path d="M1.500 1.500l11 11M12.500 1.500l-11 11" stroke="#d8d8d8" stroke-width="1.900"/></svg><div style="left:210px;top:245px;width:92px;height:40px;overflow:hidden"><div class="t ui" style="left:0;top:7px;font-size:21.500px;font-weight:bold;line-height:26px;color:#e4e4e4;text-shadow:0 1.500px 1px #222;transform:scaleX(1)">Untitled-1 @ 44%</div></div><div style="left:148px;top:292px;width:2392px;height:1360px;background:#606060"></div><div style="left:180px;top:326px;width:2330px;height:71px;background:#404040"></div><div style="left:180px;top:397px;width:2330px;height:1px;background:#0c0c0c"></div><div style="left:180px;top:1078px;width:2330px;height:1px;background:#0c0c0c"></div><div style="left:180px;top:1079px;width:2330px;height:31px;background:#404040"></div><div style="left:180px;top:1110px;width:2330px;height:1px;background:#0c0c0c"></div><div style="left:1250px;top:460px;width:713px;height:556px;border:1px solid #f4586c"></div><div style="left:1262px;top:471px;width:697px;height:540px;background:#000"></div><div style="left:1258px;top:468px;width:697px;height:540px;background:#fff;border:1px solid #000"></div><div style="left:1273px;top:484px;width:667px;height:508px;border-top:1px solid #f83cf8;border-bottom:1px solid #f83cf8;border-left:1px solid #9a1cff;border-right:1px solid #9a1cff"></div><div style="left:553px;top:1173px;width:1410px;height:520px;border:1px solid #f4586c"></div><div style="left:565px;top:1184px;width:1394px;height:520px;background:#000"></div><div style="left:561px;top:1181px;width:1394px;height:520px;background:#fff;border:1px solid #000"></div><div style="left:1258px;top:1181px;width:1px;height:520px;background:#000"></div><div style="left:576px;top:1197px;width:667px;height:520px;border-top:1px solid #f83cf8;border-bottom:1px solid #f83cf8;border-left:1px solid #9a1cff;border-right:1px solid #9a1cff"></div><div style="left:1273px;top:1197px;width:667px;height:520px;border-top:1px solid #f83cf8;border-bottom:1px solid #f83cf8;border-left:1px solid #9a1cff;border-right:1px solid #9a1cff"></div><div style="left:148px;top:292px;width:2362px;height:32px;background:#1e1e1e"></div><div style="left:148px;top:324px;width:2362px;height:2px;background:#8c8c8c"></div><svg style="left:180px;top:292px" width="2330" height="32" viewBox="180 0 2330 32" shape-rendering="crispEdges"><path d="M182.5 23V32M190.5 29V32M197.5 26V32M205.5 29V32M213.5 23V32M221.5 29V32M229.5 26V32M237.5 29V32M245.5 2V32M253.5 29V32M261.5 26V32M269.5 29V32M277.5 23V32M285.5 29V32M292.5 26V32M300.5 29V32M308.5 23V32M316.5 29V32M324.5 26V32M332.5 29V32M340.5 23V32M348.5 29V32M356.5 26V32M364.5 29V32M372.5 23V32M380.5 29V32M387.5 26V32M395.5 29V32M403.5 23V32M411.5 29V32M419.5 26V32M427.5 29V32M435.5 23V32M443.5 29V32M451.5 26V32M459.5 29V32M467.5 23V32M475.5 29V32M482.5 26V32M490.5 29V32M498.5 2V32M506.5 29V32M514.5 26V32M522.5 29V32M530.5 23V32M538.5 29V32M546.5 26V32M554.5 29V32M562.5 23V32M570.5 29V32M577.5 26V32M585.5 29V32M593.5 23V32M601.5 29V32M609.5 26V32M617.5 29V32M625.5 23V32M633.5 29V32M641.5 26V32M649.5 29V32M657.5 23V32M665.5 29V32M672.5 26V32M680.5 29V32M688.5 23V32M696.5 29V32M704.5 26V32M712.5 29V32M720.5 23V32M728.5 29V32M736.5 26V32M744.5 29V32M752.5 2V32M760.5 29V32M767.5 26V32M775.5 29V32M783.5 23V32M791.5 29V32M799.5 26V32M807.5 29V32M815.5 23V32M823.5 29V32M831.5 26V32M839.5 29V32M847.5 23V32M855.5 29V32M862.5 26V32M870.5 29V32M878.5 23V32M886.5 29V32M894.5 26V32M902.5 29V32M910.5 23V32M918.5 29V32M926.5 26V32M934.5 29V32M942.5 23V32M950.5 29V32M957.5 26V32M965.5 29V32M973.5 23V32M981.5 29V32M989.5 26V32M997.5 29V32M1005.5 2V32M1013.5 29V32M1021.5 26V32M1029.5 29V32M1037.5 23V32M1045.5 29V32M1052.5 26V32M1060.5 29V32M1068.5 23V32M1076.5 29V32M1084.5 26V32M1092.5 29V32M1100.5 23V32M1108.5 29V32M1116.5 26V32M1124.5 29V32M1132.5 23V32M1140.5 29V32M1147.5 26V32M1155.5 29V32M1163.5 23V32M1171.5 29V32M1179.5 26V32M1187.5 29V32M1195.5 23V32M1203.5 29V32M1211.5 26V32M1219.5 29V32M1227.5 23V32M1235.5 29V32M1242.5 26V32M1250.5 29V32M1258.5 2V32M1266.5 29V32M1274.5 26V32M1282.5 29V32M1290.5 23V32M1298.5 29V32M1306.5 26V32M1314.5 29V32M1322.5 23V32M1330.5 29V32M1337.5 26V32M1345.5 29V32M1353.5 23V32M1361.5 29V32M1369.5 26V32M1377.5 29V32M1385.5 23V32M1393.5 29V32M1401.5 26V32M1409.5 29V32M1417.5 23V32M1425.5 29V32M1432.5 26V32M1440.5 29V32M1448.5 23V32M1456.5 29V32M1464.5 26V32M1472.5 29V32M1480.5 23V32M1488.5 29V32M1496.5 26V32M1504.5 29V32M1512.5 2V32M1520.5 29V32M1527.5 26V32M1535.5 29V32M1543.5 23V32M1551.5 29V32M1559.5 26V32M1567.5 29V32M1575.5 23V32M1583.5 29V32M1591.5 26V32M1599.5 29V32M1607.5 23V32M1615.5 29V32M1622.5 26V32M1630.5 29V32M1638.5 23V32M1646.5 29V32M1654.5 26V32M1662.5 29V32M1670.5 23V32M1678.5 29V32M1686.5 26V32M1694.5 29V32M1702.5 23V32M1710.5 29V32M1717.5 26V32M1725.5 29V32M1733.5 23V32M1741.5 29V32M1749.5 26V32M1757.5 29V32M1765.5 2V32M1773.5 29V32M1781.5 26V32M1789.5 29V32M1797.5 23V32M1805.5 29V32M1812.5 26V32M1820.5 29V32M1828.5 23V32M1836.5 29V32M1844.5 26V32M1852.5 29V32M1860.5 23V32M1868.5 29V32M1876.5 26V32M1884.5 29V32M1892.5 23V32M1900.5 29V32M1907.5 26V32M1915.5 29V32M1923.5 23V32M1931.5 29V32M1939.5 26V32M1947.5 29V32M1955.5 23V32M1963.5 29V32M1971.5 26V32M1979.5 29V32M1987.5 23V32M1995.5 29V32M2002.5 26V32M2010.5 29V32M2018.5 2V32M2026.5 29V32M2034.5 26V32M2042.5 29V32M2050.5 23V32M2058.5 29V32M2066.5 26V32M2074.5 29V32M2082.5 23V32M2090.5 29V32M2097.5 26V32M2105.5 29V32M2113.5 23V32M2121.5 29V32M2129.5 26V32M2137.5 29V32M2145.5 23V32M2153.5 29V32M2161.5 26V32M2169.5 29V32M2177.5 23V32M2185.5 29V32M2192.5 26V32M2200.5 29V32M2208.5 23V32M2216.5 29V32M2224.5 26V32M2232.5 29V32M2240.5 23V32M2248.5 29V32M2256.5 26V32M2264.5 29V32M2272.5 2V32M2280.5 29V32M2287.5 26V32M2295.5 29V32M2303.5 23V32M2311.5 29V32M2319.5 26V32M2327.5 29V32M2335.5 23V32M2343.5 29V32M2351.5 26V32M2359.5 29V32M2367.5 23V32M2375.5 29V32M2382.5 26V32M2390.5 29V32M2398.5 23V32M2406.5 29V32M2414.5 26V32M2422.5 29V32M2430.5 23V32M2438.5 29V32M2446.5 26V32M2454.5 29V32M2462.5 23V32M2470.5 29V32M2477.5 26V32M2485.5 29V32M2493.5 23V32M2501.5 29V32" stroke="#a2a2a2" stroke-width="1" fill="none"/></svg><div class="t" style="left:249px;top:297px;font-size:20.500px;line-height:20px;color:#dcdcdc;font-family:'DejaVu Sans','Liberation Sans',sans-serif;transform:scaleX(.9);transform-origin:0 0">16</div><div class="t" style="left:1009px;top:297px;font-size:20.500px;line-height:20px;color:#dcdcdc;font-family:'DejaVu Sans','Liberation Sans',sans-serif;transform:scaleX(.9);transform-origin:0 0">4</div><div class="t" style="left:1262px;top:297px;font-size:20.500px;line-height:20px;color:#dcdcdc;font-family:'DejaVu Sans','Liberation Sans',sans-serif;transform:scaleX(.9);transform-origin:0 0">0</div><div class="t" style="left:1516px;top:297px;font-size:20.500px;line-height:20px;color:#dcdcdc;font-family:'DejaVu Sans','Liberation Sans',sans-serif;transform:scaleX(.9);transform-origin:0 0">4</div><div class="t" style="left:1769px;top:297px;font-size:20.500px;line-height:20px;color:#dcdcdc;font-family:'DejaVu Sans','Liberation Sans',sans-serif;transform:scaleX(.9);transform-origin:0 0">8</div><div class="t" style="left:2022px;top:297px;font-size:20.500px;line-height:20px;color:#dcdcdc;font-family:'DejaVu Sans','Liberation Sans',sans-serif;transform:scaleX(.9);transform-origin:0 0">12</div><div class="t" style="left:2276px;top:297px;font-size:20.500px;line-height:20px;color:#dcdcdc;font-family:'DejaVu Sans','Liberation Sans',sans-serif;transform:scaleX(.9);transform-origin:0 0">16</div><div style="left:146px;top:326px;width:32px;height:1326px;background:#1e1e1e"></div><div style="left:146px;top:326px;width:32px;height:71px;background:#4b4b4b"></div><div style="left:146px;top:1079px;width:32px;height:31px;background:#4b4b4b"></div><div style="left:148px;top:397px;width:30px;height:1px;background:#8a8a8a"></div><div style="left:148px;top:1078px;width:30px;height:1px;background:#161616"></div><div style="left:148px;top:1110px;width:30px;height:1px;background:#161616"></div><div style="left:178px;top:326px;width:2px;height:1326px;background:#7e7e7e"></div><svg style="left:148px;top:326px" width="30" height="1326" viewBox="0 326 30 1326" shape-rendering="crispEdges"><path d="M21 405.5H30M27 413.5H30M24 421.5H30M27 429.5H30M21 437.5H30M27 445.5H30M24 452.5H30M27 460.5H30M0 468.5H30M27 476.5H30M24 484.5H30M27 492.5H30M21 500.5H30M27 508.5H30M24 516.5H30M27 524.5H30M21 532.5H30M27 540.5H30M24 547.5H30M27 555.5H30M21 563.5H30M27 571.5H30M24 579.5H30M27 587.5H30M21 595.5H30M27 603.5H30M24 611.5H30M27 619.5H30M21 627.5H30M27 635.5H30M24 642.5H30M27 650.5H30M21 658.5H30M27 666.5H30M24 674.5H30M27 682.5H30M21 690.5H30M27 698.5H30M24 706.5H30M27 714.5H30M0 722.5H30M27 730.5H30M24 737.5H30M27 745.5H30M21 753.5H30M27 761.5H30M24 769.5H30M27 777.5H30M21 785.5H30M27 793.5H30M24 801.5H30M27 809.5H30M21 817.5H30M27 825.5H30M24 832.5H30M27 840.5H30M21 848.5H30M27 856.5H30M24 864.5H30M27 872.5H30M21 880.5H30M27 888.5H30M24 896.5H30M27 904.5H30M21 912.5H30M27 920.5H30M24 927.5H30M27 935.5H30M21 943.5H30M27 951.5H30M24 959.5H30M27 967.5H30M0 975.5H30M27 983.5H30M24 991.5H30M27 999.5H30M21 1007.5H30M27 1015.5H30M24 1022.5H30M27 1030.5H30M21 1038.5H30M27 1046.5H30M24 1054.5H30M27 1062.5H30M21 1070.5H30" stroke="#a2a2a2" stroke-width="1" fill="none"/><path d="M21 1118.5H30M27 1126.5H30M24 1134.5H30M27 1141.5H30M21 1149.5H30M27 1157.5H30M24 1165.5H30M27 1173.5H30M0 1181.5H30M27 1189.5H30M24 1197.5H30M27 1205.5H30M21 1213.5H30M27 1221.5H30M24 1228.5H30M27 1236.5H30M21 1244.5H30M27 1252.5H30M24 1260.5H30M27 1268.5H30M21 1276.5H30M27 1284.5H30M24 1292.5H30M27 1300.5H30M21 1308.5H30M27 1316.5H30M24 1323.5H30M27 1331.5H30M21 1339.5H30M27 1347.5H30M24 1355.5H30M27 1363.5H30M21 1371.5H30M27 1379.5H30M24 1387.5H30M27 1395.5H30M21 1403.5H30M27 1411.5H30M24 1418.5H30M27 1426.5H30M0 1434.5H30M27 1442.5H30M24 1450.5H30M27 1458.5H30M21 1466.5H30M27 1474.5H30M24 1482.5H30M27 1490.5H30M21 1498.5H30M27 1506.5H30M24 1513.5H30M27 1521.5H30M21 1529.5H30M27 1537.5H30M24 1545.5H30M27 1553.5H30M21 1561.5H30M27 1569.5H30M24 1577.5H30M27 1585.5H30M21 1593.5H30M27 1601.5H30M24 1608.5H30M27 1616.5H30M21 1624.5H30M27 1632.5H30M24 1640.5H30M27 1648.5H30" stroke="#757575" stroke-width="1" fill="none"/></svg><div style="left:178px;top:1111px;width:2px;height:541px;background:#666"></div><div class="t" style="left:152.500px;top:473px;font-size:20.500px;line-height:20px;color:#dcdcdc;font-family:'DejaVu Sans','Liberation Sans',sans-serif;transform:scaleX(.86);transform-origin:0 0">0</div><div class="t" style="left:152.500px;top:727px;font-size:20.500px;line-height:20px;color:#dcdcdc;font-family:'DejaVu Sans','Liberation Sans',sans-serif;transform:scaleX(.86);transform-origin:0 0">4</div><div class="t" style="left:152.500px;top:980px;font-size:20.500px;line-height:20px;color:#dcdcdc;font-family:'DejaVu Sans','Liberation Sans',sans-serif;transform:scaleX(.86);transform-origin:0 0">8</div><div class="t" style="left:152.500px;top:1186px;font-size:20.500px;line-height:20px;color:#adadad;font-family:'DejaVu Sans','Liberation Sans',sans-serif;transform:scaleX(.86);transform-origin:0 0">0</div><div class="t" style="left:152.500px;top:1439px;font-size:20.500px;line-height:20px;color:#adadad;font-family:'DejaVu Sans','Liberation Sans',sans-serif;transform:scaleX(.86);transform-origin:0 0">4</div><div style="left:148px;top:292px;width:30px;height:32px;background:#1e1e1e"></div><div style="left:148px;top:302px;width:30px;height:2px;background:repeating-linear-gradient(90deg,#cfcfcf 0 2px,transparent 2px 4px)"></div><div style="left:156px;top:292px;width:2px;height:32px;background:repeating-linear-gradient(#cfcfcf 0 2px,transparent 2px 4px)"></div><div style="left:178px;top:292px;width:2px;height:34px;background:#8c8c8c"></div><div style="left:180px;top:1590px;width:2330px;height:61px;background:linear-gradient(rgba(0,0,0,0),rgba(0,0,0,.045))"></div><div style="left:2510px;top:292px;width:30px;height:1360px;background:#343434;border-left:2px solid #262626;border-right:2px solid #262626"></div><div style="left:2512px;top:292px;width:26px;height:33px;background:#3c3c3c"></div><div style="left:2516px;top:303px;width:0;height:0;border-bottom:11px solid #dadada;border-left:9px solid transparent;border-right:9px solid transparent"></div><div style="left:2512px;top:332px;width:26px;height:210px;background:#909090"></div><div style="left:2517px;top:1632px;width:0;height:0;border-top:10px solid #dadada;border-left:8px solid transparent;border-right:8px solid transparent"></div><div style="left:146px;top:1651px;width:2394px;height:35px;background:#484848;border-top:2px solid #6a6a6a"></div><div style="left:171px;top:1660px;width:2px;height:18px;background:#8e8e8e"></div><div style="left:175px;top:1660px;width:0;height:0;border-right:11px solid #8e8e8e;border-top:9px solid transparent;border-bottom:9px solid transparent"></div><div style="left:215px;top:1660px;width:0;height:0;border-right:11px solid #8e8e8e;border-top:9px solid transparent;border-bottom:9px solid transparent"></div><div class="t ui" style="left:263px;top:1657px;font-size:22px;line-height:26px;color:#e0e0e0;transform:scaleX(0.95)">1</div><div style="left:404px;top:1664px;width:0;height:0;border-top:9px solid #d2d2d2;border-left:8px solid transparent;border-right:8px solid transparent"></div><div style="left:458px;top:1660px;width:0;height:0;border-left:11px solid #d2d2d2;border-top:9px solid transparent;border-bottom:9px solid transparent"></div><div style="left:498px;top:1660px;width:0;height:0;border-left:11px solid #d2d2d2;border-top:9px solid transparent;border-bottom:9px solid transparent"></div><div style="left:511px;top:1660px;width:2px;height:18px;background:#d2d2d2"></div><svg style="left:545px;top:1656px" width="34" height="26" viewBox="0 0 34 26"><circle cx="13" cy="13" r="12" fill="#c6c6c6"/><path d="M7 6h7l5 5v9H7z" fill="#c6c6c6" stroke="#333" stroke-width="2"/><path d="M13.500 6v5.500H19" fill="none" stroke="#333" stroke-width="2"/><path d="M27 21h6l-3 3z" fill="#d0d0d0"/></svg><div class="t ui" style="left:610px;top:1657px;font-size:22px;line-height:26px;color:#dedede;transform:scaleX(0.985)">[Basic] (working)</div><div style="left:815px;top:1664px;width:0;height:0;border-top:9px solid #d2d2d2;border-left:7.5px solid transparent;border-right:7.5px solid transparent"></div><div style="left:861px;top:1659px;width:22px;height:22px;background:radial-gradient(circle at 45% 40%,#5fb43a,#3f9a24);border-radius:50%"></div><div class="t ui" style="left:895px;top:1657px;font-size:22px;line-height:26px;color:#dedede;transform:scaleX(0.985)">No errors</div><div style="left:1021px;top:1667px;width:0;height:0;border-top:6px solid #d2d2d2;border-left:6px solid transparent;border-right:6px solid transparent"></div><div style="left:1046px;top:1651px;width:1418px;height:35px;background:#333;border-left:2px solid #262626;border-right:2px solid #262626;border-top:2px solid #262626"></div><div style="left:1058px;top:1660px;width:0;height:0;border-right:12px solid #dadada;border-top:10px solid transparent;border-bottom:10px solid transparent"></div><div style="left:1241px;top:1653px;width:1111px;height:31px;background:#8b8b8b"></div><div style="left:2440px;top:1660px;width:0;height:0;border-left:12px solid #dadada;border-top:10px solid transparent;border-bottom:10px solid transparent"></div><svg style="left:2474px;top:1658px" width="32" height="24" viewBox="0 0 32 24"><rect x="1.200" y="1.200" width="29.600" height="21.600" fill="none" stroke="#dcdcdc" stroke-width="2.400"/><path d="M16 1v22" stroke="#dcdcdc" stroke-width="2.400"/></svg><svg style="left:2518px;top:1664px" width="20" height="20" viewBox="0 0 20 20"><rect x="0" y="16" width="2" height="2" fill="#b8b8b8"/><rect x="4" y="12" width="2" height="2" fill="#b8b8b8"/><rect x="4" y="16" width="2" height="2" fill="#b8b8b8"/><rect x="8" y="8" width="2" height="2" fill="#b8b8b8"/><rect x="8" y="12" width="2" height="2" fill="#b8b8b8"/><rect x="8" y="16" width="2" height="2" fill="#b8b8b8"/><rect x="12" y="4" width="2" height="2" fill="#b8b8b8"/><rect x="12" y="8" width="2" height="2" fill="#b8b8b8"/><rect x="12" y="12" width="2" height="2" fill="#b8b8b8"/><rect x="12" y="16" width="2" height="2" fill="#b8b8b8"/><rect x="16" y="0" width="2" height="2" fill="#b8b8b8"/><rect x="16" y="4" width="2" height="2" fill="#b8b8b8"/><rect x="16" y="8" width="2" height="2" fill="#b8b8b8"/><rect x="16" y="12" width="2" height="2" fill="#b8b8b8"/><rect x="16" y="16" width="2" height="2" fill="#b8b8b8"/></svg><div style="left:2540px;top:237px;width:6px;height:1449px;background:#2b2b2b"></div><div style="left:2546px;top:237px;width:328px;height:1449px;background:#484848"></div><div style="left:2546px;top:237px;width:328px;height:22px;background:linear-gradient(#2b2b2b,#333)"></div><svg style="left:2848px;top:241px" width="16" height="12" viewBox="0 0 16 12" fill="none" stroke="#cfcfcf" stroke-width="1.600"><path d="M6 1L1.500 6 6 11M13.500 1L9 6l4.500 5"/></svg><div style="left:2546px;top:259px;width:328px;height:2px;background:#2a2a2a"></div><div style="left:2546px;top:261px;width:328px;height:1px;background:#565656"></div><div style="left:2546px;top:453px;width:328px;height:2px;background:#2a2a2a"></div><div style="left:2546px;top:455px;width:328px;height:1px;background:#565656"></div><div style="left:2546px;top:590px;width:328px;height:2px;background:#2a2a2a"></div><div style="left:2546px;top:592px;width:328px;height:1px;background:#565656"></div><div style="left:2546px;top:729px;width:328px;height:2px;background:#2a2a2a"></div><div style="left:2546px;top:731px;width:328px;height:1px;background:#565656"></div><div style="left:2690px;top:266px;width:38px;height:8px;background:repeating-linear-gradient(90deg,#161616 0 2px,transparent 2px 4px)"></div><div style="left:2690px;top:461px;width:38px;height:8px;background:repeating-linear-gradient(90deg,#161616 0 2px,transparent 2px 4px)"></div><div style="left:2690px;top:599px;width:38px;height:8px;background:repeating-linear-gradient(90deg,#161616 0 2px,transparent 2px 4px)"></div><div class="t ui" style="left:2619px;top:291px;font-size:25.500px;font-weight:bold;line-height:30px;color:#dedede;text-shadow:0 1.500px 1px #252525;transform:scaleX(.895)">Pages</div><div class="t ui" style="left:2619px;top:348px;font-size:25.500px;font-weight:bold;line-height:30px;color:#dedede;text-shadow:0 1.500px 1px #252525;transform:scaleX(.895)">Layers</div><div class="t ui" style="left:2619px;top:404px;font-size:25.500px;font-weight:bold;line-height:30px;color:#dedede;text-shadow:0 1.500px 1px #252525;transform:scaleX(.895)">Links</div><div class="t ui" style="left:2619px;top:486px;font-size:25.500px;font-weight:bold;line-height:30px;color:#dedede;text-shadow:0 1.500px 1px #252525;transform:scaleX(.895)">Stroke</div><div class="t ui" style="left:2619px;top:541px;font-size:25.500px;font-weight:bold;line-height:30px;color:#dedede;text-shadow:0 1.500px 1px #252525;transform:scaleX(.895)">Color</div><div class="t ui" style="left:2619px;top:624px;font-size:25.500px;font-weight:bold;line-height:30px;color:#dedede;text-shadow:0 1.500px 1px #252525;transform:scaleX(.895)">Swatches</div><div class="t ui" style="left:2619px;top:680px;font-size:25.500px;font-weight:bold;line-height:30px;color:#dedede;text-shadow:0 1.500px 1px #252525;transform:scaleX(.895)">CC Libraries</div><svg style="left:2567px;top:289px" width="36" height="34" viewBox="0 0 36 34"><path d="M1 10l8-7h6v27H1z" fill="url(#gv)"/><path d="M35 10l-8-7h-6v27h14z" fill="url(#gv)"/><path d="M1 10h8V3zM35 10h-8V3z" fill="#f0f0f0"/><path d="M18 0v34" stroke="#e8e8e8" stroke-width="2"/></svg><svg style="left:2560px;top:340px" width="50" height="44" viewBox="2560 340 50 44"><path d="M2568.400 367.800L2573.200 364.400 2585 372.800 2596.800 364.400 2601.600 367.800 2585 379.300Z" fill="#b4b4b4"/><path d="M2585 344.800L2601.600 356.600 2585 368.500 2568.400 356.600Z" fill="url(#gv)"/></svg><svg style="left:2567px;top:407px" width="36" height="24" viewBox="0 0 36 24"><g fill="none" stroke="#d8d8d8" stroke-width="4"><path d="M14 3H9c-9 0-9 18 0 18h5M22 3h5c9 0 9 18 0 18h-5"/><path d="M11 12h14" stroke-width="4.500"/></g></svg><svg style="left:2567px;top:486px" width="36" height="28" viewBox="0 0 36 28"><rect x="0" y="1" width="35" height="2" fill="#dcdcdc"/><rect x="0" y="8" width="35" height="3.500" fill="#d6d6d6"/><rect x="0" y="17" width="35" height="8" fill="url(#gv)"/></svg><svg style="left:2565px;top:541px" width="42" height="32" viewBox="0 0 42 32"><path d="M21 2C9 2 1 8 1 17c0 8 8 13 18 13 6 0 7-3 5-5-2-3 0-5 4-5h5c5 0 8-3 8-7C41 7 32 2 21 2z" fill="url(#gv)"/><g fill="#484848"><circle cx="10" cy="14" r="3"/><circle cx="18" cy="9" r="3"/><circle cx="28" cy="9" r="3"/><circle cx="11" cy="22" r="2.600"/><circle cx="34" cy="14" r="2.600"/></g></svg><svg style="left:2567px;top:627px" width="34" height="24" viewBox="0 0 34 24"><rect x="1" y="1" width="31" height="22" fill="#6a6a6a" stroke="#d8d8d8" stroke-width="2"/><rect x="2" y="2.0" width="9" height="9.500" fill="#2a2a2a" stroke="#d8d8d8" stroke-width="1.200"/><rect x="12" y="2.0" width="9" height="9.500" fill="#4e4e4e" stroke="#d8d8d8" stroke-width="1.200"/><rect x="22" y="2.0" width="9" height="9.500" fill="#8a8a8a" stroke="#d8d8d8" stroke-width="1.200"/><rect x="2" y="12.5" width="9" height="9.500" fill="#777" stroke="#d8d8d8" stroke-width="1.200"/><rect x="12" y="12.5" width="9" height="9.500" fill="#5c5c5c" stroke="#d8d8d8" stroke-width="1.200"/><rect x="22" y="12.5" width="9" height="9.500" fill="#3e3e3e" stroke="#d8d8d8" stroke-width="1.200"/></svg><svg style="left:2563px;top:678px" width="44" height="34" viewBox="0 0 44 34"><path d="M13 31.500C5 31.500 1 26.500 1 20.500 1 15 5 11.500 10 11 12 5 17 1 24 1 32 1 37.500 6.500 38.500 13 41.500 14.500 43.500 17.500 43.500 21.500 43.500 27.500 39 31.500 33 31.500Z" fill="url(#gv)"/><g fill="none" stroke="#4a4a4a" stroke-width="2.500" stroke-linecap="round"><path d="M13.500 26C7.500 25 7.500 17 13.500 15.500L26.500 11.500C32 10 35.500 14.500 33 18.500L30 21"/><path d="M33.500 17.500C38.500 19 38 26 32 26.500H20.500L30 21" /></g></svg><div style="left:0px;top:1684px;width:2876px;height:2px;background:#1e1e1e"></div></div><div id="filemenu" style="left:302px;top:44px;width:476px;height:1210px;background:#cdcdcb;border-radius:0 0 11px 11px;box-shadow:0 10px 30px rgba(0,0,0,.3),0 0 0 1px rgba(0,0,0,.16);z-index:40;overflow:hidden"><div style="left:235px;top:1105px;width:500px;height:400px;background:rgba(255,255,255,.5);filter:blur(55px)"></div><div class="mi" style="top:8px;color:#fff;background:#035fcb;"><span class="a l">New</span><div class="arr" style="left:434px;top:10px;border-left-color:#fff"></div></div><div class="mi" style="top:46px;color:#1e1e1e;"><span class="a l">Open...</span><span class="a k" style="left:404px;color:#1e1e1e">⌘</span><span class="a k" style="left:432px;color:#1e1e1e">O</span></div><div class="mi" style="top:84px;color:#1e1e1e;"><span class="a l">Browse in Bridge...</span><span class="a k op" style="left:374.5px;color:#1e1e1e">⌥</span><span class="a k" style="left:404px;color:#1e1e1e">⌘</span><span class="a k" style="left:432px;color:#1e1e1e">O</span></div><div class="mi" style="top:122px;color:#1e1e1e;"><span class="a l">Open Recent</span><div class="arr" style="left:434px;top:10px;border-left-color:#1e1e1e"></div></div><div class="sep" style="top:170px"></div><div class="mi" style="top:184px;color:#1e1e1e;"><span class="a l">Close</span><span class="a k" style="left:404px;color:#1e1e1e">⌘</span><span class="a k" style="left:432px;color:#1e1e1e">W</span></div><div class="mi" style="top:222px;color:#1e1e1e;"><span class="a l">Save</span><span class="a k" style="left:404px;color:#1e1e1e">⌘</span><span class="a k" style="left:432px;color:#1e1e1e">S</span></div><div class="mi" style="top:260px;color:#1e1e1e;"><span class="a l">Save As...</span><span class="a k sh" style="left:376px;color:#1e1e1e">⇧</span><span class="a k" style="left:404px;color:#1e1e1e">⌘</span><span class="a k" style="left:432px;color:#1e1e1e">S</span></div><div class="mi" style="top:298px;color:#959595;"><span class="a l">Check In...</span></div><div class="mi" style="top:336px;color:#1e1e1e;"><span class="a l">Save a Copy...</span><span class="a k op" style="left:374.5px;color:#1e1e1e">⌥</span><span class="a k" style="left:404px;color:#1e1e1e">⌘</span><span class="a k" style="left:432px;color:#1e1e1e">S</span></div><div class="mi" style="top:374px;color:#959595;"><span class="a l">Revert</span></div><div class="sep" style="top:422px"></div><div class="mi" style="top:436px;color:#1e1e1e;"><span class="a l">Search Adobe Stock...</span></div><div class="mi" style="top:474px;color:#1e1e1e;"><span class="a l">Place...</span><span class="a k" style="left:404px;color:#1e1e1e">⌘</span><span class="a k" style="left:432px;color:#1e1e1e">D</span></div><div class="mi" style="top:512px;color:#1e1e1e;"><span class="a l">Place from CC Libraries...</span></div><div class="mi" style="top:550px;color:#1e1e1e;"><span class="a l">Import XML...</span></div><div class="sep" style="top:598px"></div><div class="mi" style="top:612px;color:#1e1e1e;"><span class="a l">Adobe PDF Presets</span><div class="arr" style="left:434px;top:10px;border-left-color:#1e1e1e"></div></div><div class="mi" style="top:650px;color:#1e1e1e;"><span class="a l">Export...</span><span class="a k" style="left:404px;color:#1e1e1e">⌘</span><span class="a k" style="left:432px;color:#1e1e1e">E</span></div><div class="sep" style="top:698px"></div><div class="mi" style="top:712px;color:#1e1e1e;"><span class="a l">Publish Online...</span></div><div class="mi" style="top:750px;color:#1e1e1e;"><span class="a l">Recently Published</span><div class="arr" style="left:434px;top:10px;border-left-color:#1e1e1e"></div></div><div class="mi" style="top:788px;color:#1e1e1e;"><span class="a l">Publish Online Dashboard...</span></div><div class="sep" style="top:836px"></div><div class="mi" style="top:850px;color:#1e1e1e;"><span class="a l">Document Presets</span><div class="arr" style="left:434px;top:10px;border-left-color:#1e1e1e"></div></div><div class="mi" style="top:888px;color:#1e1e1e;"><span class="a l">Document Setup...</span><span class="a k op" style="left:374.5px;color:#1e1e1e">⌥</span><span class="a k" style="left:404px;color:#1e1e1e">⌘</span><span class="a k" style="left:432px;color:#1e1e1e">P</span></div><div class="sep" style="top:936px"></div><div class="mi" style="top:950px;color:#1e1e1e;"><span class="a l">User...</span></div><div class="mi" style="top:988px;color:#1e1e1e;"><span class="a l">File Info...</span><span class="a k op" style="left:346.5px;color:#1e1e1e">⌥</span><span class="a k sh" style="left:376px;color:#1e1e1e">⇧</span><span class="a k" style="left:404px;color:#1e1e1e">⌘</span><span class="a k" style="left:432px;color:#1e1e1e">I</span></div><div class="sep" style="top:1036px"></div><div class="mi" style="top:1050px;color:#1e1e1e;"><span class="a l">Package...</span><span class="a k op" style="left:346.5px;color:#1e1e1e">⌥</span><span class="a k sh" style="left:376px;color:#1e1e1e">⇧</span><span class="a k" style="left:404px;color:#1e1e1e">⌘</span><span class="a k" style="left:432px;color:#1e1e1e">P</span></div><div class="mi" style="top:1088px;color:#1e1e1e;"><span class="a l">Print Presets</span><div class="arr" style="left:434px;top:10px;border-left-color:#1e1e1e"></div></div><div class="mi" style="top:1126px;color:#1e1e1e;"><span class="a l">Print...</span><span class="a k" style="left:404px;color:#1e1e1e">⌘</span><span class="a k" style="left:432px;color:#1e1e1e">P</span></div><div class="mi" style="top:1164px;color:#1e1e1e;"><span class="a l">Print Booklet...</span></div></div><div id="submenu" style="left:778px;top:56px;width:312px;height:130px;background:#cececc;border-radius:11px;box-shadow:0 10px 28px rgba(0,0,0,.3),0 0 0 1px rgba(0,0,0,.16);z-index:41;overflow:hidden"><div class="mi" style="top:8px;width:312px"><span class="a l" style="left:42px">Document...</span><span class="a k" style="left:239px">⌘</span><span class="a k" style="left:266px">N</span></div><div class="mi" style="top:46px;width:312px"><span class="a l" style="left:42px">Book...</span></div><div class="mi" style="top:84px;width:312px"><span class="a l" style="left:42px">Library...</span></div></div></body></html>
